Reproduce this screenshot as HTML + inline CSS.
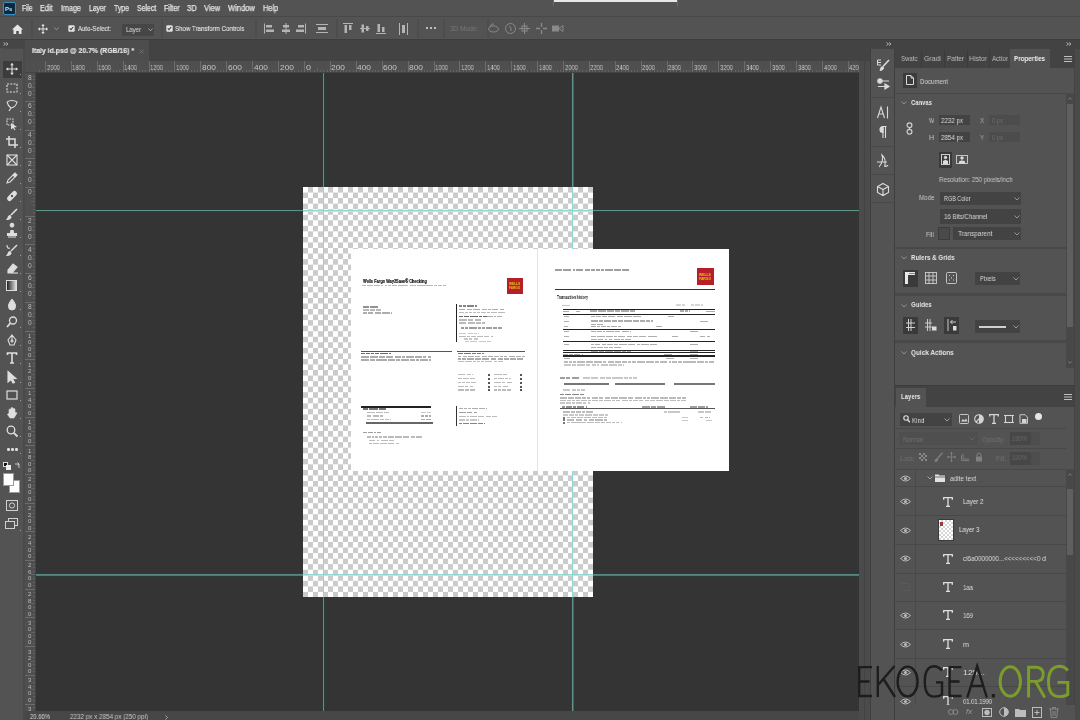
<!DOCTYPE html><html><head><meta charset="utf-8"><style>
*{box-sizing:border-box;margin:0;padding:0}
html,body{width:1080px;height:720px;overflow:hidden;background:#535353;font-family:"Liberation Sans",sans-serif;color:#d6d6d6;-webkit-font-smoothing:antialiased}
div,span,svg{position:absolute}
.t{white-space:nowrap;line-height:1;will-change:transform}
svg{overflow:visible}
</style></head><body>
<div style="left:0px;top:0px;width:1080px;height:17px;background:#535353;"></div>
<div style="left:0px;top:16px;width:1080px;height:1px;background:#484848;"></div>
<div style="left:3px;top:2px;width:13px;height:13px;background:#0a2a40;border:1px solid #3a8fc0;border-radius:2px"></div>
<span class="t" style="left:5px;top:5.5px;font-size:6px;color:#c8e4ff;font-weight:bold">Ps</span>
<span class="t" style="left:22.3px;top:4px;font-size:8.4px;color:#e4e4e4;-webkit-text-stroke:0.25px #e4e4e4;transform:scaleX(0.7905);transform-origin:0 0">File</span>
<span class="t" style="left:40.3px;top:4px;font-size:8.4px;color:#e4e4e4;-webkit-text-stroke:0.25px #e4e4e4;transform:scaleX(0.8774);transform-origin:0 0">Edit</span>
<span class="t" style="left:61px;top:4px;font-size:8.4px;color:#e4e4e4;-webkit-text-stroke:0.25px #e4e4e4;transform:scaleX(0.8567);transform-origin:0 0">Image</span>
<span class="t" style="left:89px;top:4px;font-size:8.4px;color:#e4e4e4;-webkit-text-stroke:0.25px #e4e4e4;transform:scaleX(0.8090);transform-origin:0 0">Layer</span>
<span class="t" style="left:114.2px;top:4px;font-size:8.4px;color:#e4e4e4;-webkit-text-stroke:0.25px #e4e4e4;transform:scaleX(0.8237);transform-origin:0 0">Type</span>
<span class="t" style="left:137.1px;top:4px;font-size:8.4px;color:#e4e4e4;-webkit-text-stroke:0.25px #e4e4e4;transform:scaleX(0.8224);transform-origin:0 0">Select</span>
<span class="t" style="left:163.8px;top:4px;font-size:8.4px;color:#e4e4e4;-webkit-text-stroke:0.25px #e4e4e4;transform:scaleX(0.8464);transform-origin:0 0">Filter</span>
<span class="t" style="left:187.3px;top:4px;font-size:8.4px;color:#e4e4e4;-webkit-text-stroke:0.25px #e4e4e4;transform:scaleX(0.9033);transform-origin:0 0">3D</span>
<span class="t" style="left:204.4px;top:4px;font-size:8.4px;color:#e4e4e4;-webkit-text-stroke:0.25px #e4e4e4;transform:scaleX(0.8972);transform-origin:0 0">View</span>
<span class="t" style="left:228px;top:4px;font-size:8.4px;color:#e4e4e4;-webkit-text-stroke:0.25px #e4e4e4;transform:scaleX(0.9004);transform-origin:0 0">Window</span>
<span class="t" style="left:262.8px;top:4px;font-size:8.4px;color:#e4e4e4;-webkit-text-stroke:0.25px #e4e4e4;transform:scaleX(0.8798);transform-origin:0 0">Help</span>
<div style="left:554px;top:0px;width:123px;height:2px;background:#e8e8e8;"></div>
<div style="left:553px;top:0px;width:1px;height:6px;background:#6a6a6a;"></div>
<div style="left:677px;top:0px;width:1px;height:6px;background:#6a6a6a;"></div>
<div style="left:0px;top:17px;width:1080px;height:23px;background:#535353;"></div>
<div style="left:0px;top:39px;width:1080px;height:1px;background:#3e3e3e;"></div>
<svg style="left:12px;top:24px" width="11" height="10" viewBox="0 0 11 10" fill="#e6e6e6" stroke="#e6e6e6" stroke-width="0"><path d="M5.5 0.5 L11 5.5 L9.5 5.5 L9.5 10 L6.8 10 L6.8 7 L4.2 7 L4.2 10 L1.5 10 L1.5 5.5 L0 5.5 Z"/></svg>
<div style="left:31px;top:19px;width:1.5px;height:19px;background:#4d4d4d;"></div>
<div style="left:161px;top:19px;width:1.5px;height:19px;background:#4d4d4d;"></div>
<div style="left:255px;top:19px;width:1.5px;height:19px;background:#4d4d4d;"></div>
<div style="left:336px;top:19px;width:1.5px;height:19px;background:#4d4d4d;"></div>
<div style="left:417px;top:19px;width:1.5px;height:19px;background:#4d4d4d;"></div>
<div style="left:443px;top:19px;width:1.5px;height:19px;background:#4d4d4d;"></div>
<div style="left:487px;top:19px;width:1.5px;height:19px;background:#4d4d4d;"></div>
<svg style="left:38px;top:24px" width="10" height="10" viewBox="0 0 10 10" fill="none" stroke="#e0e0e0" stroke-width="1"><path d="M5 0.5V9.5M0.5 5H9.5"/><path d="M5 0 L3.3 2 H6.7Z M5 10 L3.3 8 H6.7Z M0 5 L2 3.3 V6.7Z M10 5 L8 3.3 V6.7Z" fill="#e0e0e0" stroke="none"/></svg>
<svg style="left:54px;top:27px" width="5" height="4" viewBox="0 0 5 4" fill="none" stroke="#9a9a9a" stroke-width="0.9"><path d="M0.5 0.5 L2.5 2.8 L4.5 0.5"/></svg>
<svg style="left:68px;top:25px" width="7" height="7" viewBox="0 0 7 7" fill="none" stroke="#e2e2e2" stroke-width="1.1"><rect x="0.3" y="0.3" width="6.4" height="6.4" rx="1.2" fill="#e2e2e2" stroke="none"/><path d="M1.8 3.4 L3 4.7 L5.2 2" stroke="#454545"/></svg>
<span class="t" style="left:78.2px;top:24.7px;font-size:8px;color:#dedede;-webkit-text-stroke:0.2px #dedede;transform:scaleX(0.7572);transform-origin:0 0">Auto-Select:</span>
<div style="left:122px;top:23.5px;width:32px;height:12px;background:#464646;border-radius:1px"></div>
<span class="t" style="left:126px;top:25.93px;font-size:7.4px;color:#dedede;;transform:scaleX(0.8103);transform-origin:0 0">Layer</span>
<svg style="left:148px;top:28px" width="5" height="4" viewBox="0 0 5 4" fill="none" stroke="#aaaaaa" stroke-width="0.9"><path d="M0.5 0.5 L2.5 2.8 L4.5 0.5"/></svg>
<svg style="left:166px;top:25px" width="7" height="7" viewBox="0 0 7 7" fill="none" stroke="#e2e2e2" stroke-width="1.1"><rect x="0.3" y="0.3" width="6.4" height="6.4" rx="1.2" fill="#e2e2e2" stroke="none"/><path d="M1.8 3.4 L3 4.7 L5.2 2" stroke="#454545"/></svg>
<span class="t" style="left:175.3px;top:24.7px;font-size:8px;color:#dedede;-webkit-text-stroke:0.2px #dedede;transform:scaleX(0.7689);transform-origin:0 0">Show Transform Controls</span>
<svg style="left:264px;top:23px" width="10" height="11" viewBox="0 0 10 11" fill="none" stroke="#b4b4b4" stroke-width="1"><path d="M0.5 0.5V10.5"/><rect x="2" y="2" width="6" height="2.5" fill="#b4b4b4" stroke="none"/><rect x="2" y="6.5" width="8" height="2.5" fill="#b4b4b4" stroke="none"/></svg>
<svg style="left:281px;top:23px" width="10" height="11" viewBox="0 0 10 11" fill="none" stroke="#b4b4b4" stroke-width="1"><path d="M5 0V11"/><rect x="2" y="2" width="6" height="2.5" fill="#b4b4b4" stroke="none"/><rect x="1" y="6.5" width="8" height="2.5" fill="#b4b4b4" stroke="none"/></svg>
<svg style="left:296px;top:23px" width="10" height="11" viewBox="0 0 10 11" fill="none" stroke="#b4b4b4" stroke-width="1"><path d="M9.5 0.5V10.5"/><rect x="2" y="2" width="6" height="2.5" fill="#b4b4b4" stroke="none"/><rect x="0" y="6.5" width="8" height="2.5" fill="#b4b4b4" stroke="none"/></svg>
<svg style="left:316px;top:24px" width="12" height="9" viewBox="0 0 12 9" fill="none" stroke="#b4b4b4" stroke-width="1"><path d="M0 0.5H12M0 8.5H12"/><rect x="2" y="3" width="8" height="3" fill="#b4b4b4" stroke="none"/></svg>
<svg style="left:343px;top:23px" width="10" height="11" viewBox="0 0 10 11" fill="none" stroke="#b4b4b4" stroke-width="1"><path d="M0 0.5H10"/><rect x="1.5" y="2" width="2.5" height="8" fill="#b4b4b4" stroke="none"/><rect x="6" y="2" width="2.5" height="5" fill="#b4b4b4" stroke="none"/></svg>
<svg style="left:360px;top:23px" width="10" height="11" viewBox="0 0 10 11" fill="none" stroke="#b4b4b4" stroke-width="1"><path d="M0 5.5H10"/><rect x="1.5" y="1.5" width="2.5" height="8" fill="#b4b4b4" stroke="none"/><rect x="6" y="3" width="2.5" height="5" fill="#b4b4b4" stroke="none"/></svg>
<svg style="left:376px;top:23px" width="10" height="11" viewBox="0 0 10 11" fill="none" stroke="#b4b4b4" stroke-width="1"><path d="M0 10.5H10"/><rect x="1.5" y="1" width="2.5" height="8" fill="#b4b4b4" stroke="none"/><rect x="6" y="4" width="2.5" height="5" fill="#b4b4b4" stroke="none"/></svg>
<svg style="left:399px;top:23px" width="9" height="12" viewBox="0 0 9 12" fill="none" stroke="#b4b4b4" stroke-width="1"><path d="M0.5 0V12M8.5 0V12"/><rect x="3" y="2" width="3" height="8" fill="#b4b4b4" stroke="none"/></svg>
<div style="left:426px;top:27px;width:2.4px;height:2.4px;background:#e0e0e0;border-radius:50%"></div>
<div style="left:430px;top:27px;width:2.4px;height:2.4px;background:#e0e0e0;border-radius:50%"></div>
<div style="left:434px;top:27px;width:2.4px;height:2.4px;background:#e0e0e0;border-radius:50%"></div>
<span class="t" style="left:450px;top:24.93px;font-size:7.4px;color:#7a7a7a;;transform:scaleX(0.8727);transform-origin:0 0">3D Mode:</span>
<svg style="left:488px;top:23px" width="11" height="11" viewBox="0 0 11 11" fill="none" stroke="#8a8a8a" stroke-width="1"><ellipse cx="5.5" cy="6" rx="5" ry="3"/><path d="M2 4 Q3 0 6 1"/></svg>
<svg style="left:505px;top:23px" width="11" height="11" viewBox="0 0 11 11" fill="none" stroke="#8a8a8a" stroke-width="1"><circle cx="5.5" cy="5.5" r="5"/><path d="M4 3 Q7 4 6 8"/></svg>
<svg style="left:519px;top:23px" width="11" height="11" viewBox="0 0 11 11" fill="none" stroke="#8a8a8a" stroke-width="1"><path d="M5.5 0V11M0 5.5H11"/><rect x="3" y="3" width="5" height="5"/></svg>
<svg style="left:536px;top:23px" width="11" height="11" viewBox="0 0 11 11" fill="none" stroke="#8a8a8a" stroke-width="1.3"><path d="M5.5 0V4M5.5 7V11M0 5.5H4M7 5.5H11"/></svg>
<svg style="left:552px;top:24px" width="12" height="9" viewBox="0 0 12 9" fill="none" stroke="#8a8a8a" stroke-width="1"><rect x="0" y="1.5" width="7" height="6" fill="#8a8a8a" stroke="none"/><path d="M7 4.5 L11 1.5 V7.5Z"/></svg>
<div style="left:25px;top:40px;width:845px;height:21px;background:#434343;"></div>
<div style="left:25px;top:40px;width:124px;height:21px;background:#4d4d4d;"></div>
<span class="t" style="left:32px;top:47.2px;font-size:8px;color:#e6e6e6;font-weight:bold;-webkit-text-stroke:0.15px #e6e6e6;transform:scaleX(0.8608);transform-origin:0 0">Italy id.psd @ 20.7% (RGB/16) *</span>
<svg style="left:139px;top:48.5px" width="5" height="5" viewBox="0 0 5 5" fill="none" stroke="#727272" stroke-width="0.9"><path d="M0.5 0.5L4.5 4.5M4.5 0.5L0.5 4.5"/></svg>
<div style="left:25px;top:61px;width:834px;height:12px;background:#4f4f4f;"></div>
<div style="left:25px;top:73px;width:11px;height:638px;background:#4f4f4f;"></div>
<div style="left:25px;top:72px;width:834px;height:1px;background:#434343;"></div>
<div style="left:35px;top:73px;width:1px;height:638px;background:#434343;"></div>
<div style="left:36px;top:61px;width:823px;height:11px;overflow:hidden">
<div style="left:-17px;top:0px;width:1px;height:11px;background:#6c6c6c;"></div>
<div style="left:-14px;top:9px;width:1px;height:2px;background:#626262;"></div>
<div style="left:-10px;top:9px;width:1px;height:2px;background:#626262;"></div>
<div style="left:-7px;top:9px;width:1px;height:2px;background:#626262;"></div>
<div style="left:-4px;top:7px;width:1px;height:4px;background:#626262;"></div>
<div style="left:-1px;top:9px;width:1px;height:2px;background:#626262;"></div>
<div style="left:3px;top:9px;width:1px;height:2px;background:#626262;"></div>
<div style="left:6px;top:9px;width:1px;height:2px;background:#626262;"></div>
<span class="t" style="left:-15.399999999999977px;top:3.2px;font-size:8px;color:#c4c4c4;;transform:scaleX(0.7304);transform-origin:0 0">2200</span>
<div style="left:9px;top:0px;width:1px;height:11px;background:#6c6c6c;"></div>
<div style="left:12px;top:9px;width:1px;height:2px;background:#626262;"></div>
<div style="left:15px;top:9px;width:1px;height:2px;background:#626262;"></div>
<div style="left:19px;top:9px;width:1px;height:2px;background:#626262;"></div>
<div style="left:22px;top:7px;width:1px;height:4px;background:#626262;"></div>
<div style="left:25px;top:9px;width:1px;height:2px;background:#626262;"></div>
<div style="left:28px;top:9px;width:1px;height:2px;background:#626262;"></div>
<div style="left:32px;top:9px;width:1px;height:2px;background:#626262;"></div>
<span class="t" style="left:10.5px;top:3.2px;font-size:8px;color:#c4c4c4;;transform:scaleX(0.7304);transform-origin:0 0">2000</span>
<div style="left:35px;top:0px;width:1px;height:11px;background:#6c6c6c;"></div>
<div style="left:38px;top:9px;width:1px;height:2px;background:#626262;"></div>
<div style="left:41px;top:9px;width:1px;height:2px;background:#626262;"></div>
<div style="left:45px;top:9px;width:1px;height:2px;background:#626262;"></div>
<div style="left:48px;top:7px;width:1px;height:4px;background:#626262;"></div>
<div style="left:51px;top:9px;width:1px;height:2px;background:#626262;"></div>
<div style="left:54px;top:9px;width:1px;height:2px;background:#626262;"></div>
<div style="left:58px;top:9px;width:1px;height:2px;background:#626262;"></div>
<span class="t" style="left:36.400000000000006px;top:3.2px;font-size:8px;color:#c4c4c4;;transform:scaleX(0.7304);transform-origin:0 0">1800</span>
<div style="left:61px;top:0px;width:1px;height:11px;background:#6c6c6c;"></div>
<div style="left:64px;top:9px;width:1px;height:2px;background:#626262;"></div>
<div style="left:67px;top:9px;width:1px;height:2px;background:#626262;"></div>
<div style="left:71px;top:9px;width:1px;height:2px;background:#626262;"></div>
<div style="left:74px;top:7px;width:1px;height:4px;background:#626262;"></div>
<div style="left:77px;top:9px;width:1px;height:2px;background:#626262;"></div>
<div style="left:80px;top:9px;width:1px;height:2px;background:#626262;"></div>
<div style="left:83px;top:9px;width:1px;height:2px;background:#626262;"></div>
<span class="t" style="left:62.30000000000001px;top:3.2px;font-size:8px;color:#c4c4c4;;transform:scaleX(0.7304);transform-origin:0 0">1600</span>
<div style="left:87px;top:0px;width:1px;height:11px;background:#6c6c6c;"></div>
<div style="left:90px;top:9px;width:1px;height:2px;background:#626262;"></div>
<div style="left:93px;top:9px;width:1px;height:2px;background:#626262;"></div>
<div style="left:96px;top:9px;width:1px;height:2px;background:#626262;"></div>
<div style="left:100px;top:7px;width:1px;height:4px;background:#626262;"></div>
<div style="left:103px;top:9px;width:1px;height:2px;background:#626262;"></div>
<div style="left:106px;top:9px;width:1px;height:2px;background:#626262;"></div>
<div style="left:109px;top:9px;width:1px;height:2px;background:#626262;"></div>
<span class="t" style="left:88.20000000000002px;top:3.2px;font-size:8px;color:#c4c4c4;;transform:scaleX(0.7304);transform-origin:0 0">1400</span>
<div style="left:113px;top:0px;width:1px;height:11px;background:#6c6c6c;"></div>
<div style="left:116px;top:9px;width:1px;height:2px;background:#626262;"></div>
<div style="left:119px;top:9px;width:1px;height:2px;background:#626262;"></div>
<div style="left:122px;top:9px;width:1px;height:2px;background:#626262;"></div>
<div style="left:126px;top:7px;width:1px;height:4px;background:#626262;"></div>
<div style="left:129px;top:9px;width:1px;height:2px;background:#626262;"></div>
<div style="left:132px;top:9px;width:1px;height:2px;background:#626262;"></div>
<div style="left:135px;top:9px;width:1px;height:2px;background:#626262;"></div>
<span class="t" style="left:114.10000000000002px;top:3.2px;font-size:8px;color:#c4c4c4;;transform:scaleX(0.7304);transform-origin:0 0">1200</span>
<div style="left:138px;top:0px;width:1px;height:11px;background:#6c6c6c;"></div>
<div style="left:142px;top:9px;width:1px;height:2px;background:#626262;"></div>
<div style="left:145px;top:9px;width:1px;height:2px;background:#626262;"></div>
<div style="left:148px;top:9px;width:1px;height:2px;background:#626262;"></div>
<div style="left:151px;top:7px;width:1px;height:4px;background:#626262;"></div>
<div style="left:155px;top:9px;width:1px;height:2px;background:#626262;"></div>
<div style="left:158px;top:9px;width:1px;height:2px;background:#626262;"></div>
<div style="left:161px;top:9px;width:1px;height:2px;background:#626262;"></div>
<span class="t" style="left:140.0px;top:3.2px;font-size:8px;color:#c4c4c4;;transform:scaleX(0.7304);transform-origin:0 0">1000</span>
<div style="left:164px;top:0px;width:1px;height:11px;background:#6c6c6c;"></div>
<div style="left:168px;top:9px;width:1px;height:2px;background:#626262;"></div>
<div style="left:171px;top:9px;width:1px;height:2px;background:#626262;"></div>
<div style="left:174px;top:9px;width:1px;height:2px;background:#626262;"></div>
<div style="left:177px;top:7px;width:1px;height:4px;background:#626262;"></div>
<div style="left:181px;top:9px;width:1px;height:2px;background:#626262;"></div>
<div style="left:184px;top:9px;width:1px;height:2px;background:#626262;"></div>
<div style="left:187px;top:9px;width:1px;height:2px;background:#626262;"></div>
<span class="t" style="left:165.9px;top:3.2px;font-size:8px;color:#c4c4c4;;transform:scaleX(1.0488);transform-origin:0 0">800</span>
<div style="left:190px;top:0px;width:1px;height:11px;background:#6c6c6c;"></div>
<div style="left:194px;top:9px;width:1px;height:2px;background:#626262;"></div>
<div style="left:197px;top:9px;width:1px;height:2px;background:#626262;"></div>
<div style="left:200px;top:9px;width:1px;height:2px;background:#626262;"></div>
<div style="left:203px;top:7px;width:1px;height:4px;background:#626262;"></div>
<div style="left:206px;top:9px;width:1px;height:2px;background:#626262;"></div>
<div style="left:210px;top:9px;width:1px;height:2px;background:#626262;"></div>
<div style="left:213px;top:9px;width:1px;height:2px;background:#626262;"></div>
<span class="t" style="left:191.8px;top:3.2px;font-size:8px;color:#c4c4c4;;transform:scaleX(1.0488);transform-origin:0 0">600</span>
<div style="left:216px;top:0px;width:1px;height:11px;background:#6c6c6c;"></div>
<div style="left:219px;top:9px;width:1px;height:2px;background:#626262;"></div>
<div style="left:223px;top:9px;width:1px;height:2px;background:#626262;"></div>
<div style="left:226px;top:9px;width:1px;height:2px;background:#626262;"></div>
<div style="left:229px;top:7px;width:1px;height:4px;background:#626262;"></div>
<div style="left:232px;top:9px;width:1px;height:2px;background:#626262;"></div>
<div style="left:236px;top:9px;width:1px;height:2px;background:#626262;"></div>
<div style="left:239px;top:9px;width:1px;height:2px;background:#626262;"></div>
<span class="t" style="left:217.7px;top:3.2px;font-size:8px;color:#c4c4c4;;transform:scaleX(1.0488);transform-origin:0 0">400</span>
<div style="left:242px;top:0px;width:1px;height:11px;background:#6c6c6c;"></div>
<div style="left:245px;top:9px;width:1px;height:2px;background:#626262;"></div>
<div style="left:249px;top:9px;width:1px;height:2px;background:#626262;"></div>
<div style="left:252px;top:9px;width:1px;height:2px;background:#626262;"></div>
<div style="left:255px;top:7px;width:1px;height:4px;background:#626262;"></div>
<div style="left:258px;top:9px;width:1px;height:2px;background:#626262;"></div>
<div style="left:262px;top:9px;width:1px;height:2px;background:#626262;"></div>
<div style="left:265px;top:9px;width:1px;height:2px;background:#626262;"></div>
<span class="t" style="left:243.60000000000002px;top:3.2px;font-size:8px;color:#c4c4c4;;transform:scaleX(1.0488);transform-origin:0 0">200</span>
<div style="left:268px;top:0px;width:1px;height:11px;background:#6c6c6c;"></div>
<div style="left:271px;top:9px;width:1px;height:2px;background:#626262;"></div>
<div style="left:274px;top:9px;width:1px;height:2px;background:#626262;"></div>
<div style="left:278px;top:9px;width:1px;height:2px;background:#626262;"></div>
<div style="left:281px;top:7px;width:1px;height:4px;background:#626262;"></div>
<div style="left:284px;top:9px;width:1px;height:2px;background:#626262;"></div>
<div style="left:287px;top:9px;width:1px;height:2px;background:#626262;"></div>
<div style="left:291px;top:9px;width:1px;height:2px;background:#626262;"></div>
<span class="t" style="left:269.5px;top:3.2px;font-size:8px;color:#c4c4c4;;transform:scaleX(1.1238);transform-origin:0 0">0</span>
<div style="left:294px;top:0px;width:1px;height:11px;background:#6c6c6c;"></div>
<div style="left:297px;top:9px;width:1px;height:2px;background:#626262;"></div>
<div style="left:300px;top:9px;width:1px;height:2px;background:#626262;"></div>
<div style="left:304px;top:9px;width:1px;height:2px;background:#626262;"></div>
<div style="left:307px;top:7px;width:1px;height:4px;background:#626262;"></div>
<div style="left:310px;top:9px;width:1px;height:2px;background:#626262;"></div>
<div style="left:313px;top:9px;width:1px;height:2px;background:#626262;"></div>
<div style="left:317px;top:9px;width:1px;height:2px;background:#626262;"></div>
<span class="t" style="left:295.4px;top:3.2px;font-size:8px;color:#c4c4c4;;transform:scaleX(1.0488);transform-origin:0 0">200</span>
<div style="left:320px;top:0px;width:1px;height:11px;background:#6c6c6c;"></div>
<div style="left:323px;top:9px;width:1px;height:2px;background:#626262;"></div>
<div style="left:326px;top:9px;width:1px;height:2px;background:#626262;"></div>
<div style="left:330px;top:9px;width:1px;height:2px;background:#626262;"></div>
<div style="left:333px;top:7px;width:1px;height:4px;background:#626262;"></div>
<div style="left:336px;top:9px;width:1px;height:2px;background:#626262;"></div>
<div style="left:339px;top:9px;width:1px;height:2px;background:#626262;"></div>
<div style="left:342px;top:9px;width:1px;height:2px;background:#626262;"></div>
<span class="t" style="left:321.3px;top:3.2px;font-size:8px;color:#c4c4c4;;transform:scaleX(1.0488);transform-origin:0 0">400</span>
<div style="left:346px;top:0px;width:1px;height:11px;background:#6c6c6c;"></div>
<div style="left:349px;top:9px;width:1px;height:2px;background:#626262;"></div>
<div style="left:352px;top:9px;width:1px;height:2px;background:#626262;"></div>
<div style="left:355px;top:9px;width:1px;height:2px;background:#626262;"></div>
<div style="left:359px;top:7px;width:1px;height:4px;background:#626262;"></div>
<div style="left:362px;top:9px;width:1px;height:2px;background:#626262;"></div>
<div style="left:365px;top:9px;width:1px;height:2px;background:#626262;"></div>
<div style="left:368px;top:9px;width:1px;height:2px;background:#626262;"></div>
<span class="t" style="left:347.2px;top:3.2px;font-size:8px;color:#c4c4c4;;transform:scaleX(1.0488);transform-origin:0 0">600</span>
<div style="left:372px;top:0px;width:1px;height:11px;background:#6c6c6c;"></div>
<div style="left:375px;top:9px;width:1px;height:2px;background:#626262;"></div>
<div style="left:378px;top:9px;width:1px;height:2px;background:#626262;"></div>
<div style="left:381px;top:9px;width:1px;height:2px;background:#626262;"></div>
<div style="left:385px;top:7px;width:1px;height:4px;background:#626262;"></div>
<div style="left:388px;top:9px;width:1px;height:2px;background:#626262;"></div>
<div style="left:391px;top:9px;width:1px;height:2px;background:#626262;"></div>
<div style="left:394px;top:9px;width:1px;height:2px;background:#626262;"></div>
<span class="t" style="left:373.1px;top:3.2px;font-size:8px;color:#c4c4c4;;transform:scaleX(1.0488);transform-origin:0 0">800</span>
<div style="left:398px;top:0px;width:1px;height:11px;background:#6c6c6c;"></div>
<div style="left:401px;top:9px;width:1px;height:2px;background:#626262;"></div>
<div style="left:404px;top:9px;width:1px;height:2px;background:#626262;"></div>
<div style="left:407px;top:9px;width:1px;height:2px;background:#626262;"></div>
<div style="left:410px;top:7px;width:1px;height:4px;background:#626262;"></div>
<div style="left:414px;top:9px;width:1px;height:2px;background:#626262;"></div>
<div style="left:417px;top:9px;width:1px;height:2px;background:#626262;"></div>
<div style="left:420px;top:9px;width:1px;height:2px;background:#626262;"></div>
<span class="t" style="left:399.0px;top:3.2px;font-size:8px;color:#c4c4c4;;transform:scaleX(0.7304);transform-origin:0 0">1000</span>
<div style="left:423px;top:0px;width:1px;height:11px;background:#6c6c6c;"></div>
<div style="left:427px;top:9px;width:1px;height:2px;background:#626262;"></div>
<div style="left:430px;top:9px;width:1px;height:2px;background:#626262;"></div>
<div style="left:433px;top:9px;width:1px;height:2px;background:#626262;"></div>
<div style="left:436px;top:7px;width:1px;height:4px;background:#626262;"></div>
<div style="left:440px;top:9px;width:1px;height:2px;background:#626262;"></div>
<div style="left:443px;top:9px;width:1px;height:2px;background:#626262;"></div>
<div style="left:446px;top:9px;width:1px;height:2px;background:#626262;"></div>
<span class="t" style="left:424.9px;top:3.2px;font-size:8px;color:#c4c4c4;;transform:scaleX(0.7304);transform-origin:0 0">1200</span>
<div style="left:449px;top:0px;width:1px;height:11px;background:#6c6c6c;"></div>
<div style="left:453px;top:9px;width:1px;height:2px;background:#626262;"></div>
<div style="left:456px;top:9px;width:1px;height:2px;background:#626262;"></div>
<div style="left:459px;top:9px;width:1px;height:2px;background:#626262;"></div>
<div style="left:462px;top:7px;width:1px;height:4px;background:#626262;"></div>
<div style="left:465px;top:9px;width:1px;height:2px;background:#626262;"></div>
<div style="left:469px;top:9px;width:1px;height:2px;background:#626262;"></div>
<div style="left:472px;top:9px;width:1px;height:2px;background:#626262;"></div>
<span class="t" style="left:450.79999999999995px;top:3.2px;font-size:8px;color:#c4c4c4;;transform:scaleX(0.7304);transform-origin:0 0">1400</span>
<div style="left:475px;top:0px;width:1px;height:11px;background:#6c6c6c;"></div>
<div style="left:478px;top:9px;width:1px;height:2px;background:#626262;"></div>
<div style="left:482px;top:9px;width:1px;height:2px;background:#626262;"></div>
<div style="left:485px;top:9px;width:1px;height:2px;background:#626262;"></div>
<div style="left:488px;top:7px;width:1px;height:4px;background:#626262;"></div>
<div style="left:491px;top:9px;width:1px;height:2px;background:#626262;"></div>
<div style="left:495px;top:9px;width:1px;height:2px;background:#626262;"></div>
<div style="left:498px;top:9px;width:1px;height:2px;background:#626262;"></div>
<span class="t" style="left:476.7px;top:3.2px;font-size:8px;color:#c4c4c4;;transform:scaleX(0.7304);transform-origin:0 0">1600</span>
<div style="left:501px;top:0px;width:1px;height:11px;background:#6c6c6c;"></div>
<div style="left:504px;top:9px;width:1px;height:2px;background:#626262;"></div>
<div style="left:508px;top:9px;width:1px;height:2px;background:#626262;"></div>
<div style="left:511px;top:9px;width:1px;height:2px;background:#626262;"></div>
<div style="left:514px;top:7px;width:1px;height:4px;background:#626262;"></div>
<div style="left:517px;top:9px;width:1px;height:2px;background:#626262;"></div>
<div style="left:521px;top:9px;width:1px;height:2px;background:#626262;"></div>
<div style="left:524px;top:9px;width:1px;height:2px;background:#626262;"></div>
<span class="t" style="left:502.6px;top:3.2px;font-size:8px;color:#c4c4c4;;transform:scaleX(0.7304);transform-origin:0 0">1800</span>
<div style="left:527px;top:0px;width:1px;height:11px;background:#6c6c6c;"></div>
<div style="left:530px;top:9px;width:1px;height:2px;background:#626262;"></div>
<div style="left:533px;top:9px;width:1px;height:2px;background:#626262;"></div>
<div style="left:537px;top:9px;width:1px;height:2px;background:#626262;"></div>
<div style="left:540px;top:7px;width:1px;height:4px;background:#626262;"></div>
<div style="left:543px;top:9px;width:1px;height:2px;background:#626262;"></div>
<div style="left:546px;top:9px;width:1px;height:2px;background:#626262;"></div>
<div style="left:550px;top:9px;width:1px;height:2px;background:#626262;"></div>
<span class="t" style="left:528.5px;top:3.2px;font-size:8px;color:#c4c4c4;;transform:scaleX(0.7304);transform-origin:0 0">2000</span>
<div style="left:553px;top:0px;width:1px;height:11px;background:#6c6c6c;"></div>
<div style="left:556px;top:9px;width:1px;height:2px;background:#626262;"></div>
<div style="left:559px;top:9px;width:1px;height:2px;background:#626262;"></div>
<div style="left:563px;top:9px;width:1px;height:2px;background:#626262;"></div>
<div style="left:566px;top:7px;width:1px;height:4px;background:#626262;"></div>
<div style="left:569px;top:9px;width:1px;height:2px;background:#626262;"></div>
<div style="left:572px;top:9px;width:1px;height:2px;background:#626262;"></div>
<div style="left:576px;top:9px;width:1px;height:2px;background:#626262;"></div>
<span class="t" style="left:554.4px;top:3.2px;font-size:8px;color:#c4c4c4;;transform:scaleX(0.7304);transform-origin:0 0">2200</span>
<div style="left:579px;top:0px;width:1px;height:11px;background:#6c6c6c;"></div>
<div style="left:582px;top:9px;width:1px;height:2px;background:#626262;"></div>
<div style="left:585px;top:9px;width:1px;height:2px;background:#626262;"></div>
<div style="left:589px;top:9px;width:1px;height:2px;background:#626262;"></div>
<div style="left:592px;top:7px;width:1px;height:4px;background:#626262;"></div>
<div style="left:595px;top:9px;width:1px;height:2px;background:#626262;"></div>
<div style="left:598px;top:9px;width:1px;height:2px;background:#626262;"></div>
<div style="left:601px;top:9px;width:1px;height:2px;background:#626262;"></div>
<span class="t" style="left:580.3px;top:3.2px;font-size:8px;color:#c4c4c4;;transform:scaleX(0.7304);transform-origin:0 0">2400</span>
<div style="left:605px;top:0px;width:1px;height:11px;background:#6c6c6c;"></div>
<div style="left:608px;top:9px;width:1px;height:2px;background:#626262;"></div>
<div style="left:611px;top:9px;width:1px;height:2px;background:#626262;"></div>
<div style="left:614px;top:9px;width:1px;height:2px;background:#626262;"></div>
<div style="left:618px;top:7px;width:1px;height:4px;background:#626262;"></div>
<div style="left:621px;top:9px;width:1px;height:2px;background:#626262;"></div>
<div style="left:624px;top:9px;width:1px;height:2px;background:#626262;"></div>
<div style="left:627px;top:9px;width:1px;height:2px;background:#626262;"></div>
<span class="t" style="left:606.2px;top:3.2px;font-size:8px;color:#c4c4c4;;transform:scaleX(0.7304);transform-origin:0 0">2600</span>
<div style="left:631px;top:0px;width:1px;height:11px;background:#6c6c6c;"></div>
<div style="left:634px;top:9px;width:1px;height:2px;background:#626262;"></div>
<div style="left:637px;top:9px;width:1px;height:2px;background:#626262;"></div>
<div style="left:640px;top:9px;width:1px;height:2px;background:#626262;"></div>
<div style="left:644px;top:7px;width:1px;height:4px;background:#626262;"></div>
<div style="left:647px;top:9px;width:1px;height:2px;background:#626262;"></div>
<div style="left:650px;top:9px;width:1px;height:2px;background:#626262;"></div>
<div style="left:653px;top:9px;width:1px;height:2px;background:#626262;"></div>
<span class="t" style="left:632.0999999999999px;top:3.2px;font-size:8px;color:#c4c4c4;;transform:scaleX(0.7304);transform-origin:0 0">2800</span>
<div style="left:656px;top:0px;width:1px;height:11px;background:#6c6c6c;"></div>
<div style="left:660px;top:9px;width:1px;height:2px;background:#626262;"></div>
<div style="left:663px;top:9px;width:1px;height:2px;background:#626262;"></div>
<div style="left:666px;top:9px;width:1px;height:2px;background:#626262;"></div>
<div style="left:669px;top:7px;width:1px;height:4px;background:#626262;"></div>
<div style="left:673px;top:9px;width:1px;height:2px;background:#626262;"></div>
<div style="left:676px;top:9px;width:1px;height:2px;background:#626262;"></div>
<div style="left:679px;top:9px;width:1px;height:2px;background:#626262;"></div>
<span class="t" style="left:658.0px;top:3.2px;font-size:8px;color:#c4c4c4;;transform:scaleX(0.7304);transform-origin:0 0">3000</span>
<div style="left:682px;top:0px;width:1px;height:11px;background:#6c6c6c;"></div>
<div style="left:686px;top:9px;width:1px;height:2px;background:#626262;"></div>
<div style="left:689px;top:9px;width:1px;height:2px;background:#626262;"></div>
<div style="left:692px;top:9px;width:1px;height:2px;background:#626262;"></div>
<div style="left:695px;top:7px;width:1px;height:4px;background:#626262;"></div>
<div style="left:699px;top:9px;width:1px;height:2px;background:#626262;"></div>
<div style="left:702px;top:9px;width:1px;height:2px;background:#626262;"></div>
<div style="left:705px;top:9px;width:1px;height:2px;background:#626262;"></div>
<span class="t" style="left:683.9px;top:3.2px;font-size:8px;color:#c4c4c4;;transform:scaleX(0.7304);transform-origin:0 0">3200</span>
<div style="left:708px;top:0px;width:1px;height:11px;background:#6c6c6c;"></div>
<div style="left:712px;top:9px;width:1px;height:2px;background:#626262;"></div>
<div style="left:715px;top:9px;width:1px;height:2px;background:#626262;"></div>
<div style="left:718px;top:9px;width:1px;height:2px;background:#626262;"></div>
<div style="left:721px;top:7px;width:1px;height:4px;background:#626262;"></div>
<div style="left:724px;top:9px;width:1px;height:2px;background:#626262;"></div>
<div style="left:728px;top:9px;width:1px;height:2px;background:#626262;"></div>
<div style="left:731px;top:9px;width:1px;height:2px;background:#626262;"></div>
<span class="t" style="left:709.8px;top:3.2px;font-size:8px;color:#c4c4c4;;transform:scaleX(0.7304);transform-origin:0 0">3400</span>
<div style="left:734px;top:0px;width:1px;height:11px;background:#6c6c6c;"></div>
<div style="left:737px;top:9px;width:1px;height:2px;background:#626262;"></div>
<div style="left:741px;top:9px;width:1px;height:2px;background:#626262;"></div>
<div style="left:744px;top:9px;width:1px;height:2px;background:#626262;"></div>
<div style="left:747px;top:7px;width:1px;height:4px;background:#626262;"></div>
<div style="left:750px;top:9px;width:1px;height:2px;background:#626262;"></div>
<div style="left:754px;top:9px;width:1px;height:2px;background:#626262;"></div>
<div style="left:757px;top:9px;width:1px;height:2px;background:#626262;"></div>
<span class="t" style="left:735.7px;top:3.2px;font-size:8px;color:#c4c4c4;;transform:scaleX(0.7304);transform-origin:0 0">3600</span>
<div style="left:760px;top:0px;width:1px;height:11px;background:#6c6c6c;"></div>
<div style="left:763px;top:9px;width:1px;height:2px;background:#626262;"></div>
<div style="left:767px;top:9px;width:1px;height:2px;background:#626262;"></div>
<div style="left:770px;top:9px;width:1px;height:2px;background:#626262;"></div>
<div style="left:773px;top:7px;width:1px;height:4px;background:#626262;"></div>
<div style="left:776px;top:9px;width:1px;height:2px;background:#626262;"></div>
<div style="left:780px;top:9px;width:1px;height:2px;background:#626262;"></div>
<div style="left:783px;top:9px;width:1px;height:2px;background:#626262;"></div>
<span class="t" style="left:761.5999999999999px;top:3.2px;font-size:8px;color:#c4c4c4;;transform:scaleX(0.7304);transform-origin:0 0">3800</span>
<div style="left:786px;top:0px;width:1px;height:11px;background:#6c6c6c;"></div>
<div style="left:789px;top:9px;width:1px;height:2px;background:#626262;"></div>
<div style="left:792px;top:9px;width:1px;height:2px;background:#626262;"></div>
<div style="left:796px;top:9px;width:1px;height:2px;background:#626262;"></div>
<div style="left:799px;top:7px;width:1px;height:4px;background:#626262;"></div>
<div style="left:802px;top:9px;width:1px;height:2px;background:#626262;"></div>
<div style="left:805px;top:9px;width:1px;height:2px;background:#626262;"></div>
<div style="left:809px;top:9px;width:1px;height:2px;background:#626262;"></div>
<span class="t" style="left:787.5px;top:3.2px;font-size:8px;color:#c4c4c4;;transform:scaleX(0.7304);transform-origin:0 0">4000</span>
<div style="left:812px;top:0px;width:1px;height:11px;background:#6c6c6c;"></div>
<div style="left:815px;top:9px;width:1px;height:2px;background:#626262;"></div>
<div style="left:818px;top:9px;width:1px;height:2px;background:#626262;"></div>
<div style="left:822px;top:9px;width:1px;height:2px;background:#626262;"></div>
<div style="left:825px;top:7px;width:1px;height:4px;background:#626262;"></div>
<div style="left:828px;top:9px;width:1px;height:2px;background:#626262;"></div>
<div style="left:831px;top:9px;width:1px;height:2px;background:#626262;"></div>
<div style="left:835px;top:9px;width:1px;height:2px;background:#626262;"></div>
<span class="t" style="left:813.4px;top:3.2px;font-size:8px;color:#c4c4c4;;transform:scaleX(0.7304);transform-origin:0 0">4200</span>
</div>
<div style="left:25px;top:73px;width:10px;height:638px;overflow:hidden">
<div style="left:0px;top:-30px;width:10px;height:1px;background:#6c6c6c;"></div>
<div style="left:8px;top:-26px;width:2px;height:1px;background:#626262;"></div>
<div style="left:8px;top:-22px;width:2px;height:1px;background:#626262;"></div>
<div style="left:8px;top:-19px;width:2px;height:1px;background:#626262;"></div>
<div style="left:6px;top:-15px;width:4px;height:1px;background:#626262;"></div>
<div style="left:8px;top:-12px;width:2px;height:1px;background:#626262;"></div>
<div style="left:8px;top:-8px;width:2px;height:1px;background:#626262;"></div>
<div style="left:8px;top:-4px;width:2px;height:1px;background:#626262;"></div>
<span class="t" style="left:2.5px;top:-27.2px;font-size:6.0px;color:#bcbcbc;">1</span>
<span class="t" style="left:2.5px;top:-20.7px;font-size:6.0px;color:#bcbcbc;">0</span>
<span class="t" style="left:2.5px;top:-14.2px;font-size:6.0px;color:#bcbcbc;">0</span>
<span class="t" style="left:2.5px;top:-7.699999999999999px;font-size:6.0px;color:#bcbcbc;">0</span>
<div style="left:0px;top:-1px;width:10px;height:1px;background:#6c6c6c;"></div>
<div style="left:8px;top:3px;width:2px;height:1px;background:#626262;"></div>
<div style="left:8px;top:6px;width:2px;height:1px;background:#626262;"></div>
<div style="left:8px;top:10px;width:2px;height:1px;background:#626262;"></div>
<div style="left:6px;top:14px;width:4px;height:1px;background:#626262;"></div>
<div style="left:8px;top:17px;width:2px;height:1px;background:#626262;"></div>
<div style="left:8px;top:21px;width:2px;height:1px;background:#626262;"></div>
<div style="left:8px;top:24px;width:2px;height:1px;background:#626262;"></div>
<span class="t" style="left:2.5px;top:1.5000000000000027px;font-size:6.6px;color:#bcbcbc;">8</span>
<span class="t" style="left:2.5px;top:9.500000000000004px;font-size:6.6px;color:#bcbcbc;">0</span>
<span class="t" style="left:2.5px;top:17.500000000000004px;font-size:6.6px;color:#bcbcbc;">0</span>
<div style="left:0px;top:28px;width:10px;height:1px;background:#6c6c6c;"></div>
<div style="left:8px;top:31px;width:2px;height:1px;background:#626262;"></div>
<div style="left:8px;top:35px;width:2px;height:1px;background:#626262;"></div>
<div style="left:8px;top:39px;width:2px;height:1px;background:#626262;"></div>
<div style="left:6px;top:42px;width:4px;height:1px;background:#626262;"></div>
<div style="left:8px;top:46px;width:2px;height:1px;background:#626262;"></div>
<div style="left:8px;top:49px;width:2px;height:1px;background:#626262;"></div>
<div style="left:8px;top:53px;width:2px;height:1px;background:#626262;"></div>
<span class="t" style="left:2.5px;top:30.200000000000006px;font-size:6.6px;color:#bcbcbc;">6</span>
<span class="t" style="left:2.5px;top:38.2px;font-size:6.6px;color:#bcbcbc;">0</span>
<span class="t" style="left:2.5px;top:46.2px;font-size:6.6px;color:#bcbcbc;">0</span>
<div style="left:0px;top:57px;width:10px;height:1px;background:#6c6c6c;"></div>
<div style="left:8px;top:60px;width:2px;height:1px;background:#626262;"></div>
<div style="left:8px;top:64px;width:2px;height:1px;background:#626262;"></div>
<div style="left:8px;top:67px;width:2px;height:1px;background:#626262;"></div>
<div style="left:6px;top:71px;width:4px;height:1px;background:#626262;"></div>
<div style="left:8px;top:75px;width:2px;height:1px;background:#626262;"></div>
<div style="left:8px;top:78px;width:2px;height:1px;background:#626262;"></div>
<div style="left:8px;top:82px;width:2px;height:1px;background:#626262;"></div>
<span class="t" style="left:2.5px;top:58.89999999999999px;font-size:6.6px;color:#bcbcbc;">4</span>
<span class="t" style="left:2.5px;top:66.89999999999999px;font-size:6.6px;color:#bcbcbc;">0</span>
<span class="t" style="left:2.5px;top:74.89999999999999px;font-size:6.6px;color:#bcbcbc;">0</span>
<div style="left:0px;top:85px;width:10px;height:1px;background:#6c6c6c;"></div>
<div style="left:8px;top:89px;width:2px;height:1px;background:#626262;"></div>
<div style="left:8px;top:92px;width:2px;height:1px;background:#626262;"></div>
<div style="left:8px;top:96px;width:2px;height:1px;background:#626262;"></div>
<div style="left:6px;top:100px;width:4px;height:1px;background:#626262;"></div>
<div style="left:8px;top:103px;width:2px;height:1px;background:#626262;"></div>
<div style="left:8px;top:107px;width:2px;height:1px;background:#626262;"></div>
<div style="left:8px;top:110px;width:2px;height:1px;background:#626262;"></div>
<span class="t" style="left:2.5px;top:87.60000000000001px;font-size:6.6px;color:#bcbcbc;">2</span>
<span class="t" style="left:2.5px;top:95.60000000000001px;font-size:6.6px;color:#bcbcbc;">0</span>
<span class="t" style="left:2.5px;top:103.60000000000001px;font-size:6.6px;color:#bcbcbc;">0</span>
<div style="left:0px;top:114px;width:10px;height:1px;background:#6c6c6c;"></div>
<div style="left:8px;top:118px;width:2px;height:1px;background:#626262;"></div>
<div style="left:8px;top:121px;width:2px;height:1px;background:#626262;"></div>
<div style="left:8px;top:125px;width:2px;height:1px;background:#626262;"></div>
<div style="left:6px;top:128px;width:4px;height:1px;background:#626262;"></div>
<div style="left:8px;top:132px;width:2px;height:1px;background:#626262;"></div>
<div style="left:8px;top:136px;width:2px;height:1px;background:#626262;"></div>
<div style="left:8px;top:139px;width:2px;height:1px;background:#626262;"></div>
<span class="t" style="left:2.5px;top:116.3px;font-size:6.6px;color:#bcbcbc;">0</span>
<div style="left:0px;top:143px;width:10px;height:1px;background:#6c6c6c;"></div>
<div style="left:8px;top:146px;width:2px;height:1px;background:#626262;"></div>
<div style="left:8px;top:150px;width:2px;height:1px;background:#626262;"></div>
<div style="left:8px;top:153px;width:2px;height:1px;background:#626262;"></div>
<div style="left:6px;top:157px;width:4px;height:1px;background:#626262;"></div>
<div style="left:8px;top:161px;width:2px;height:1px;background:#626262;"></div>
<div style="left:8px;top:164px;width:2px;height:1px;background:#626262;"></div>
<div style="left:8px;top:168px;width:2px;height:1px;background:#626262;"></div>
<span class="t" style="left:2.5px;top:145.0px;font-size:6.6px;color:#bcbcbc;">2</span>
<span class="t" style="left:2.5px;top:153.0px;font-size:6.6px;color:#bcbcbc;">0</span>
<span class="t" style="left:2.5px;top:161.0px;font-size:6.6px;color:#bcbcbc;">0</span>
<div style="left:0px;top:171px;width:10px;height:1px;background:#6c6c6c;"></div>
<div style="left:8px;top:175px;width:2px;height:1px;background:#626262;"></div>
<div style="left:8px;top:179px;width:2px;height:1px;background:#626262;"></div>
<div style="left:8px;top:182px;width:2px;height:1px;background:#626262;"></div>
<div style="left:6px;top:186px;width:4px;height:1px;background:#626262;"></div>
<div style="left:8px;top:189px;width:2px;height:1px;background:#626262;"></div>
<div style="left:8px;top:193px;width:2px;height:1px;background:#626262;"></div>
<div style="left:8px;top:197px;width:2px;height:1px;background:#626262;"></div>
<span class="t" style="left:2.5px;top:173.70000000000002px;font-size:6.6px;color:#bcbcbc;">4</span>
<span class="t" style="left:2.5px;top:181.70000000000002px;font-size:6.6px;color:#bcbcbc;">0</span>
<span class="t" style="left:2.5px;top:189.70000000000002px;font-size:6.6px;color:#bcbcbc;">0</span>
<div style="left:0px;top:200px;width:10px;height:1px;background:#6c6c6c;"></div>
<div style="left:8px;top:204px;width:2px;height:1px;background:#626262;"></div>
<div style="left:8px;top:207px;width:2px;height:1px;background:#626262;"></div>
<div style="left:8px;top:211px;width:2px;height:1px;background:#626262;"></div>
<div style="left:6px;top:214px;width:4px;height:1px;background:#626262;"></div>
<div style="left:8px;top:218px;width:2px;height:1px;background:#626262;"></div>
<div style="left:8px;top:222px;width:2px;height:1px;background:#626262;"></div>
<div style="left:8px;top:225px;width:2px;height:1px;background:#626262;"></div>
<span class="t" style="left:2.5px;top:202.40000000000003px;font-size:6.6px;color:#bcbcbc;">6</span>
<span class="t" style="left:2.5px;top:210.40000000000003px;font-size:6.6px;color:#bcbcbc;">0</span>
<span class="t" style="left:2.5px;top:218.40000000000003px;font-size:6.6px;color:#bcbcbc;">0</span>
<div style="left:0px;top:229px;width:10px;height:1px;background:#6c6c6c;"></div>
<div style="left:8px;top:232px;width:2px;height:1px;background:#626262;"></div>
<div style="left:8px;top:236px;width:2px;height:1px;background:#626262;"></div>
<div style="left:8px;top:240px;width:2px;height:1px;background:#626262;"></div>
<div style="left:6px;top:243px;width:4px;height:1px;background:#626262;"></div>
<div style="left:8px;top:247px;width:2px;height:1px;background:#626262;"></div>
<div style="left:8px;top:250px;width:2px;height:1px;background:#626262;"></div>
<div style="left:8px;top:254px;width:2px;height:1px;background:#626262;"></div>
<span class="t" style="left:2.5px;top:231.10000000000002px;font-size:6.6px;color:#bcbcbc;">8</span>
<span class="t" style="left:2.5px;top:239.10000000000002px;font-size:6.6px;color:#bcbcbc;">0</span>
<span class="t" style="left:2.5px;top:247.10000000000002px;font-size:6.6px;color:#bcbcbc;">0</span>
<div style="left:0px;top:258px;width:10px;height:1px;background:#6c6c6c;"></div>
<div style="left:8px;top:261px;width:2px;height:1px;background:#626262;"></div>
<div style="left:8px;top:265px;width:2px;height:1px;background:#626262;"></div>
<div style="left:8px;top:268px;width:2px;height:1px;background:#626262;"></div>
<div style="left:6px;top:272px;width:4px;height:1px;background:#626262;"></div>
<div style="left:8px;top:275px;width:2px;height:1px;background:#626262;"></div>
<div style="left:8px;top:279px;width:2px;height:1px;background:#626262;"></div>
<div style="left:8px;top:283px;width:2px;height:1px;background:#626262;"></div>
<span class="t" style="left:2.5px;top:259.8px;font-size:6.0px;color:#bcbcbc;">1</span>
<span class="t" style="left:2.5px;top:266.3px;font-size:6.0px;color:#bcbcbc;">0</span>
<span class="t" style="left:2.5px;top:272.8px;font-size:6.0px;color:#bcbcbc;">0</span>
<span class="t" style="left:2.5px;top:279.3px;font-size:6.0px;color:#bcbcbc;">0</span>
<div style="left:0px;top:286px;width:10px;height:1px;background:#6c6c6c;"></div>
<div style="left:8px;top:290px;width:2px;height:1px;background:#626262;"></div>
<div style="left:8px;top:293px;width:2px;height:1px;background:#626262;"></div>
<div style="left:8px;top:297px;width:2px;height:1px;background:#626262;"></div>
<div style="left:6px;top:301px;width:4px;height:1px;background:#626262;"></div>
<div style="left:8px;top:304px;width:2px;height:1px;background:#626262;"></div>
<div style="left:8px;top:308px;width:2px;height:1px;background:#626262;"></div>
<div style="left:8px;top:311px;width:2px;height:1px;background:#626262;"></div>
<span class="t" style="left:2.5px;top:288.5px;font-size:6.0px;color:#bcbcbc;">1</span>
<span class="t" style="left:2.5px;top:295.0px;font-size:6.0px;color:#bcbcbc;">2</span>
<span class="t" style="left:2.5px;top:301.5px;font-size:6.0px;color:#bcbcbc;">0</span>
<span class="t" style="left:2.5px;top:308.0px;font-size:6.0px;color:#bcbcbc;">0</span>
<div style="left:0px;top:315px;width:10px;height:1px;background:#6c6c6c;"></div>
<div style="left:8px;top:318px;width:2px;height:1px;background:#626262;"></div>
<div style="left:8px;top:322px;width:2px;height:1px;background:#626262;"></div>
<div style="left:8px;top:326px;width:2px;height:1px;background:#626262;"></div>
<div style="left:6px;top:329px;width:4px;height:1px;background:#626262;"></div>
<div style="left:8px;top:333px;width:2px;height:1px;background:#626262;"></div>
<div style="left:8px;top:336px;width:2px;height:1px;background:#626262;"></div>
<div style="left:8px;top:340px;width:2px;height:1px;background:#626262;"></div>
<span class="t" style="left:2.5px;top:317.2px;font-size:6.0px;color:#bcbcbc;">1</span>
<span class="t" style="left:2.5px;top:323.7px;font-size:6.0px;color:#bcbcbc;">4</span>
<span class="t" style="left:2.5px;top:330.2px;font-size:6.0px;color:#bcbcbc;">0</span>
<span class="t" style="left:2.5px;top:336.7px;font-size:6.0px;color:#bcbcbc;">0</span>
<div style="left:0px;top:344px;width:10px;height:1px;background:#6c6c6c;"></div>
<div style="left:8px;top:347px;width:2px;height:1px;background:#626262;"></div>
<div style="left:8px;top:351px;width:2px;height:1px;background:#626262;"></div>
<div style="left:8px;top:354px;width:2px;height:1px;background:#626262;"></div>
<div style="left:6px;top:358px;width:4px;height:1px;background:#626262;"></div>
<div style="left:8px;top:362px;width:2px;height:1px;background:#626262;"></div>
<div style="left:8px;top:365px;width:2px;height:1px;background:#626262;"></div>
<div style="left:8px;top:369px;width:2px;height:1px;background:#626262;"></div>
<span class="t" style="left:2.5px;top:345.90000000000003px;font-size:6.0px;color:#bcbcbc;">1</span>
<span class="t" style="left:2.5px;top:352.40000000000003px;font-size:6.0px;color:#bcbcbc;">6</span>
<span class="t" style="left:2.5px;top:358.90000000000003px;font-size:6.0px;color:#bcbcbc;">0</span>
<span class="t" style="left:2.5px;top:365.40000000000003px;font-size:6.0px;color:#bcbcbc;">0</span>
<div style="left:0px;top:372px;width:10px;height:1px;background:#6c6c6c;"></div>
<div style="left:8px;top:376px;width:2px;height:1px;background:#626262;"></div>
<div style="left:8px;top:379px;width:2px;height:1px;background:#626262;"></div>
<div style="left:8px;top:383px;width:2px;height:1px;background:#626262;"></div>
<div style="left:6px;top:387px;width:4px;height:1px;background:#626262;"></div>
<div style="left:8px;top:390px;width:2px;height:1px;background:#626262;"></div>
<div style="left:8px;top:394px;width:2px;height:1px;background:#626262;"></div>
<div style="left:8px;top:397px;width:2px;height:1px;background:#626262;"></div>
<span class="t" style="left:2.5px;top:374.6px;font-size:6.0px;color:#bcbcbc;">1</span>
<span class="t" style="left:2.5px;top:381.1px;font-size:6.0px;color:#bcbcbc;">8</span>
<span class="t" style="left:2.5px;top:387.6px;font-size:6.0px;color:#bcbcbc;">0</span>
<span class="t" style="left:2.5px;top:394.1px;font-size:6.0px;color:#bcbcbc;">0</span>
<div style="left:0px;top:401px;width:10px;height:1px;background:#6c6c6c;"></div>
<div style="left:8px;top:405px;width:2px;height:1px;background:#626262;"></div>
<div style="left:8px;top:408px;width:2px;height:1px;background:#626262;"></div>
<div style="left:8px;top:412px;width:2px;height:1px;background:#626262;"></div>
<div style="left:6px;top:415px;width:4px;height:1px;background:#626262;"></div>
<div style="left:8px;top:419px;width:2px;height:1px;background:#626262;"></div>
<div style="left:8px;top:423px;width:2px;height:1px;background:#626262;"></div>
<div style="left:8px;top:426px;width:2px;height:1px;background:#626262;"></div>
<span class="t" style="left:2.5px;top:403.3px;font-size:6.0px;color:#bcbcbc;">2</span>
<span class="t" style="left:2.5px;top:409.8px;font-size:6.0px;color:#bcbcbc;">0</span>
<span class="t" style="left:2.5px;top:416.3px;font-size:6.0px;color:#bcbcbc;">0</span>
<span class="t" style="left:2.5px;top:422.8px;font-size:6.0px;color:#bcbcbc;">0</span>
<div style="left:0px;top:430px;width:10px;height:1px;background:#6c6c6c;"></div>
<div style="left:8px;top:433px;width:2px;height:1px;background:#626262;"></div>
<div style="left:8px;top:437px;width:2px;height:1px;background:#626262;"></div>
<div style="left:8px;top:440px;width:2px;height:1px;background:#626262;"></div>
<div style="left:6px;top:444px;width:4px;height:1px;background:#626262;"></div>
<div style="left:8px;top:448px;width:2px;height:1px;background:#626262;"></div>
<div style="left:8px;top:451px;width:2px;height:1px;background:#626262;"></div>
<div style="left:8px;top:455px;width:2px;height:1px;background:#626262;"></div>
<span class="t" style="left:2.5px;top:432.0px;font-size:6.0px;color:#bcbcbc;">2</span>
<span class="t" style="left:2.5px;top:438.5px;font-size:6.0px;color:#bcbcbc;">2</span>
<span class="t" style="left:2.5px;top:445.0px;font-size:6.0px;color:#bcbcbc;">0</span>
<span class="t" style="left:2.5px;top:451.5px;font-size:6.0px;color:#bcbcbc;">0</span>
<div style="left:0px;top:458px;width:10px;height:1px;background:#6c6c6c;"></div>
<div style="left:8px;top:462px;width:2px;height:1px;background:#626262;"></div>
<div style="left:8px;top:466px;width:2px;height:1px;background:#626262;"></div>
<div style="left:8px;top:469px;width:2px;height:1px;background:#626262;"></div>
<div style="left:6px;top:473px;width:4px;height:1px;background:#626262;"></div>
<div style="left:8px;top:476px;width:2px;height:1px;background:#626262;"></div>
<div style="left:8px;top:480px;width:2px;height:1px;background:#626262;"></div>
<div style="left:8px;top:484px;width:2px;height:1px;background:#626262;"></div>
<span class="t" style="left:2.5px;top:460.7px;font-size:6.0px;color:#bcbcbc;">2</span>
<span class="t" style="left:2.5px;top:467.2px;font-size:6.0px;color:#bcbcbc;">4</span>
<span class="t" style="left:2.5px;top:473.7px;font-size:6.0px;color:#bcbcbc;">0</span>
<span class="t" style="left:2.5px;top:480.2px;font-size:6.0px;color:#bcbcbc;">0</span>
<div style="left:0px;top:487px;width:10px;height:1px;background:#6c6c6c;"></div>
<div style="left:8px;top:491px;width:2px;height:1px;background:#626262;"></div>
<div style="left:8px;top:494px;width:2px;height:1px;background:#626262;"></div>
<div style="left:8px;top:498px;width:2px;height:1px;background:#626262;"></div>
<div style="left:6px;top:501px;width:4px;height:1px;background:#626262;"></div>
<div style="left:8px;top:505px;width:2px;height:1px;background:#626262;"></div>
<div style="left:8px;top:509px;width:2px;height:1px;background:#626262;"></div>
<div style="left:8px;top:512px;width:2px;height:1px;background:#626262;"></div>
<span class="t" style="left:2.5px;top:489.3999999999999px;font-size:6.0px;color:#bcbcbc;">2</span>
<span class="t" style="left:2.5px;top:495.8999999999999px;font-size:6.0px;color:#bcbcbc;">6</span>
<span class="t" style="left:2.5px;top:502.3999999999999px;font-size:6.0px;color:#bcbcbc;">0</span>
<span class="t" style="left:2.5px;top:508.8999999999999px;font-size:6.0px;color:#bcbcbc;">0</span>
<div style="left:0px;top:516px;width:10px;height:1px;background:#6c6c6c;"></div>
<div style="left:8px;top:519px;width:2px;height:1px;background:#626262;"></div>
<div style="left:8px;top:523px;width:2px;height:1px;background:#626262;"></div>
<div style="left:8px;top:527px;width:2px;height:1px;background:#626262;"></div>
<div style="left:6px;top:530px;width:4px;height:1px;background:#626262;"></div>
<div style="left:8px;top:534px;width:2px;height:1px;background:#626262;"></div>
<div style="left:8px;top:537px;width:2px;height:1px;background:#626262;"></div>
<div style="left:8px;top:541px;width:2px;height:1px;background:#626262;"></div>
<span class="t" style="left:2.5px;top:518.0999999999999px;font-size:6.0px;color:#bcbcbc;">2</span>
<span class="t" style="left:2.5px;top:524.5999999999999px;font-size:6.0px;color:#bcbcbc;">8</span>
<span class="t" style="left:2.5px;top:531.0999999999999px;font-size:6.0px;color:#bcbcbc;">0</span>
<span class="t" style="left:2.5px;top:537.5999999999999px;font-size:6.0px;color:#bcbcbc;">0</span>
<div style="left:0px;top:544px;width:10px;height:1px;background:#6c6c6c;"></div>
<div style="left:8px;top:548px;width:2px;height:1px;background:#626262;"></div>
<div style="left:8px;top:552px;width:2px;height:1px;background:#626262;"></div>
<div style="left:8px;top:555px;width:2px;height:1px;background:#626262;"></div>
<div style="left:6px;top:559px;width:4px;height:1px;background:#626262;"></div>
<div style="left:8px;top:562px;width:2px;height:1px;background:#626262;"></div>
<div style="left:8px;top:566px;width:2px;height:1px;background:#626262;"></div>
<div style="left:8px;top:570px;width:2px;height:1px;background:#626262;"></div>
<span class="t" style="left:2.5px;top:546.8px;font-size:6.0px;color:#bcbcbc;">3</span>
<span class="t" style="left:2.5px;top:553.3px;font-size:6.0px;color:#bcbcbc;">0</span>
<span class="t" style="left:2.5px;top:559.8px;font-size:6.0px;color:#bcbcbc;">0</span>
<span class="t" style="left:2.5px;top:566.3px;font-size:6.0px;color:#bcbcbc;">0</span>
<div style="left:0px;top:573px;width:10px;height:1px;background:#6c6c6c;"></div>
<div style="left:8px;top:577px;width:2px;height:1px;background:#626262;"></div>
<div style="left:8px;top:580px;width:2px;height:1px;background:#626262;"></div>
<div style="left:8px;top:584px;width:2px;height:1px;background:#626262;"></div>
<div style="left:6px;top:588px;width:4px;height:1px;background:#626262;"></div>
<div style="left:8px;top:591px;width:2px;height:1px;background:#626262;"></div>
<div style="left:8px;top:595px;width:2px;height:1px;background:#626262;"></div>
<div style="left:8px;top:598px;width:2px;height:1px;background:#626262;"></div>
<span class="t" style="left:2.5px;top:575.5px;font-size:6.0px;color:#bcbcbc;">3</span>
<span class="t" style="left:2.5px;top:582.0px;font-size:6.0px;color:#bcbcbc;">2</span>
<span class="t" style="left:2.5px;top:588.5px;font-size:6.0px;color:#bcbcbc;">0</span>
<span class="t" style="left:2.5px;top:595.0px;font-size:6.0px;color:#bcbcbc;">0</span>
<div style="left:0px;top:602px;width:10px;height:1px;background:#6c6c6c;"></div>
<div style="left:8px;top:605px;width:2px;height:1px;background:#626262;"></div>
<div style="left:8px;top:609px;width:2px;height:1px;background:#626262;"></div>
<div style="left:8px;top:613px;width:2px;height:1px;background:#626262;"></div>
<div style="left:6px;top:616px;width:4px;height:1px;background:#626262;"></div>
<div style="left:8px;top:620px;width:2px;height:1px;background:#626262;"></div>
<div style="left:8px;top:623px;width:2px;height:1px;background:#626262;"></div>
<div style="left:8px;top:627px;width:2px;height:1px;background:#626262;"></div>
<span class="t" style="left:2.5px;top:604.1999999999999px;font-size:6.0px;color:#bcbcbc;">3</span>
<span class="t" style="left:2.5px;top:610.6999999999999px;font-size:6.0px;color:#bcbcbc;">4</span>
<span class="t" style="left:2.5px;top:617.1999999999999px;font-size:6.0px;color:#bcbcbc;">0</span>
<span class="t" style="left:2.5px;top:623.6999999999999px;font-size:6.0px;color:#bcbcbc;">0</span>
<div style="left:0px;top:631px;width:10px;height:1px;background:#6c6c6c;"></div>
<div style="left:8px;top:634px;width:2px;height:1px;background:#626262;"></div>
<div style="left:8px;top:638px;width:2px;height:1px;background:#626262;"></div>
<div style="left:8px;top:641px;width:2px;height:1px;background:#626262;"></div>
<div style="left:6px;top:645px;width:4px;height:1px;background:#626262;"></div>
<div style="left:8px;top:649px;width:2px;height:1px;background:#626262;"></div>
<div style="left:8px;top:652px;width:2px;height:1px;background:#626262;"></div>
<div style="left:8px;top:656px;width:2px;height:1px;background:#626262;"></div>
<span class="t" style="left:2.5px;top:632.9px;font-size:6.0px;color:#bcbcbc;">3</span>
<span class="t" style="left:2.5px;top:639.4px;font-size:6.0px;color:#bcbcbc;">6</span>
<span class="t" style="left:2.5px;top:645.9px;font-size:6.0px;color:#bcbcbc;">0</span>
<span class="t" style="left:2.5px;top:652.4px;font-size:6.0px;color:#bcbcbc;">0</span>
</div>
<div style="left:36px;top:73px;width:823px;height:638px;background:#343434;"></div>
<div style="left:303px;top:187px;width:290px;height:410px;background:#ffffff;background-image:conic-gradient(#cbcbcb 25%,#fff 0 50%,#cbcbcb 0 75%,#fff 0);background-size:10px 11.1px;background-position:0 0"></div>
<div style="left:36px;top:210px;width:823px;height:1px;background:#5f938a;"></div>
<div style="left:36px;top:211px;width:267px;height:1px;background:#24433b;"></div>
<div style="left:593px;top:211px;width:266px;height:1px;background:#24433b;"></div>
<div style="left:36px;top:573px;width:267px;height:1px;background:#2c3a39;"></div>
<div style="left:593px;top:573px;width:266px;height:1px;background:#2c3a39;"></div>
<div style="left:36px;top:574px;width:823px;height:1px;background:#578781;"></div>
<div style="left:36px;top:575px;width:267px;height:1px;background:#4f7b75;"></div>
<div style="left:593px;top:575px;width:266px;height:1px;background:#4f7b75;"></div>
<div style="left:36px;top:576px;width:267px;height:1px;background:#293a36;"></div>
<div style="left:593px;top:576px;width:266px;height:1px;background:#293a36;"></div>
<div style="left:323px;top:73px;width:1px;height:638px;background:#5f938a;"></div>
<div style="left:324px;top:73px;width:1px;height:114px;background:#24403a;"></div>
<div style="left:324px;top:597px;width:1px;height:114px;background:#24403a;"></div>
<div style="left:571px;top:73px;width:1px;height:114px;background:#25403a;"></div>
<div style="left:571px;top:597px;width:1px;height:114px;background:#25403a;"></div>
<div style="left:572px;top:73px;width:1px;height:638px;background:#5f938a;"></div>
<div style="left:573px;top:73px;width:1px;height:114px;background:#3e6660;"></div>
<div style="left:573px;top:597px;width:1px;height:114px;background:#3e6660;"></div>
<div style="left:303px;top:210px;width:290px;height:1px;background:#8fd8d2;"></div>
<div style="left:303px;top:211px;width:290px;height:1px;background:#b8e6e0;"></div>
<div style="left:303px;top:574px;width:290px;height:1px;background:#8fd8d2;"></div>
<div style="left:303px;top:575px;width:290px;height:1px;background:#b8e6e0;"></div>
<div style="left:323px;top:187px;width:1px;height:410px;background:#8fd8d2;"></div>
<div style="left:572px;top:187px;width:1px;height:410px;background:#8fd8d2;"></div>
<div style="left:351px;top:249px;width:378px;height:222px;background:#ffffff;"></div>
<div style="left:537px;top:249px;width:1px;height:222px;background:#e4e4e4;"></div>
<span class="t" style="left:362.5px;top:277.51px;font-size:6.2px;color:#111;font-weight:bold;-webkit-text-stroke:0.2px #111;transform:scaleX(0.6302);transform-origin:0 0">Wells Fargo Way2Save® Checking</span>
<div style="left:362px;top:284.85px;width:84px;height:1.3px;background:transparent;background-image:linear-gradient(90deg,transparent 0.00px,#b9b9b9 0.00px,#b9b9b9 4.28px,transparent 4.28px,transparent 5.19px,#b9b9b9 5.19px,#b9b9b9 11.27px,transparent 11.27px,transparent 12.12px,#b9b9b9 12.12px,#b9b9b9 17.56px,transparent 17.56px,transparent 18.62px,#b9b9b9 18.62px,#b9b9b9 21.44px,transparent 21.44px,transparent 22.60px,#b9b9b9 22.60px,#b9b9b9 25.30px,transparent 25.30px,transparent 26.40px,#b9b9b9 26.40px,#b9b9b9 29.29px,transparent 29.29px,transparent 30.15px,#b9b9b9 30.15px,#b9b9b9 34.99px,transparent 34.99px,transparent 36.37px,#b9b9b9 36.37px,#b9b9b9 39.55px,transparent 39.55px,transparent 40.50px,#b9b9b9 40.50px,#b9b9b9 46.45px,transparent 46.45px,transparent 47.92px,#b9b9b9 47.92px,#b9b9b9 53.59px,transparent 53.59px,transparent 54.67px,#b9b9b9 54.67px,#b9b9b9 62.54px,transparent 62.54px,transparent 63.37px,#b9b9b9 63.37px,#b9b9b9 70.59px,transparent 70.59px,transparent 71.60px,#b9b9b9 71.60px,#b9b9b9 74.89px,transparent 74.89px,transparent 75.77px,#b9b9b9 75.77px,#b9b9b9 79.97px,transparent 79.97px,transparent 81.34px,#b9b9b9 81.34px,#b9b9b9 84.00px,transparent 84.00px)"></div>
<div style="left:507px;top:278px;width:16px;height:16px;background:#b3202a;"></div>
<span class="t" style="left:508.5px;top:282.5px;font-size:3.2px;color:#f2c21a;font-weight:bold;line-height:1.2">WELLS<br>FARGO</span>
<div style="left:363px;top:306.35px;width:15px;height:1.3px;background:transparent;background-image:linear-gradient(90deg,transparent 0.00px,#929292 0.00px,#929292 6.01px,transparent 6.01px,transparent 7.07px,#929292 7.07px,#929292 12.59px,transparent 12.59px,transparent 13.43px,#929292 13.43px,#929292 15.00px,transparent 15.00px)"></div>
<div style="left:363px;top:309.35px;width:19px;height:1.3px;background:transparent;background-image:linear-gradient(90deg,transparent 0.00px,#bbbbbb 0.00px,#bbbbbb 6.24px,transparent 6.24px,transparent 7.34px,#bbbbbb 7.34px,#bbbbbb 11.57px,transparent 11.57px,transparent 12.78px,#bbbbbb 12.78px,#bbbbbb 17.77px,transparent 17.77px,transparent 18.78px,#bbbbbb 18.78px,#bbbbbb 19.00px,transparent 19.00px)"></div>
<div style="left:363px;top:312.35px;width:29px;height:1.3px;background:transparent;background-image:linear-gradient(90deg,transparent 0.00px,#adadad 0.00px,#adadad 3.84px,transparent 3.84px,transparent 5.04px,#adadad 5.04px,#adadad 10.43px,transparent 10.43px,transparent 11.85px,#adadad 11.85px,#adadad 18.36px,transparent 18.36px,transparent 19.36px,#adadad 19.36px,#adadad 27.25px,transparent 27.25px,transparent 28.13px,#adadad 28.13px,#adadad 29.00px,transparent 29.00px)"></div>
<div style="left:456px;top:304px;width:1px;height:38px;background:#222;"></div>
<div style="left:459px;top:305.35px;width:18px;height:1.3px;background:transparent;background-image:linear-gradient(90deg,transparent 0.00px,#848484 0.00px,#848484 3.34px,transparent 3.34px,transparent 4.48px,#848484 4.48px,#848484 7.19px,transparent 7.19px,transparent 8.46px,#848484 8.46px,#848484 15.17px,transparent 15.17px,transparent 16.37px,#848484 16.37px,#848484 18.00px,transparent 18.00px)"></div>
<div style="left:459px;top:308.85px;width:45px;height:1.3px;background:transparent;background-image:linear-gradient(90deg,transparent 0.00px,#adadad 0.00px,#adadad 6.32px,transparent 6.32px,transparent 7.54px,#adadad 7.54px,#adadad 13.23px,transparent 13.23px,transparent 14.35px,#adadad 14.35px,#adadad 21.47px,transparent 21.47px,transparent 22.93px,#adadad 22.93px,#adadad 28.04px,transparent 28.04px,transparent 29.30px,#adadad 29.30px,#adadad 32.14px,transparent 32.14px,transparent 33.43px,#adadad 33.43px,#adadad 39.49px,transparent 39.49px,transparent 40.98px,#adadad 40.98px,#adadad 45.00px,transparent 45.00px)"></div>
<div style="left:459px;top:311.85px;width:46px;height:1.3px;background:transparent;background-image:linear-gradient(90deg,transparent 0.00px,#bbbbbb 0.00px,#bbbbbb 4.62px,transparent 4.62px,transparent 5.89px,#bbbbbb 5.89px,#bbbbbb 8.51px,transparent 8.51px,transparent 9.64px,#bbbbbb 9.64px,#bbbbbb 13.06px,transparent 13.06px,transparent 13.94px,#bbbbbb 13.94px,#bbbbbb 16.77px,transparent 16.77px,transparent 18.11px,#bbbbbb 18.11px,#bbbbbb 21.32px,transparent 21.32px,transparent 22.29px,#bbbbbb 22.29px,#bbbbbb 26.94px,transparent 26.94px,transparent 28.35px,#bbbbbb 28.35px,#bbbbbb 31.29px,transparent 31.29px,transparent 32.41px,#bbbbbb 32.41px,#bbbbbb 37.93px,transparent 37.93px,transparent 39.35px,#bbbbbb 39.35px,#bbbbbb 46.00px,transparent 46.00px)"></div>
<div style="left:459px;top:315.85px;width:28px;height:1.6px;background:transparent;background-image:linear-gradient(90deg,transparent 0.00px,#696969 0.00px,#696969 4.03px,transparent 4.03px,transparent 5.12px,#696969 5.12px,#696969 9.60px,transparent 9.60px,transparent 11.01px,#696969 11.01px,#696969 18.78px,transparent 18.78px,transparent 19.69px,#696969 19.69px,#696969 23.16px,transparent 23.16px,transparent 24.12px,#696969 24.12px,#696969 27.90px,transparent 27.90px)"></div>
<div style="left:487px;top:315.85px;width:16px;height:1.3px;background:transparent;background-image:linear-gradient(90deg,transparent 0.00px,#adadad 0.00px,#adadad 5.74px,transparent 5.74px,transparent 6.72px,#adadad 6.72px,#adadad 9.25px,transparent 9.25px,transparent 10.34px,#adadad 10.34px,#adadad 14.87px,transparent 14.87px)"></div>
<div style="left:459px;top:319.35px;width:22px;height:1.3px;background:transparent;background-image:linear-gradient(90deg,transparent 0.00px,#bbbbbb 0.00px,#bbbbbb 7.74px,transparent 7.74px,transparent 9.03px,#bbbbbb 9.03px,#bbbbbb 14.36px,transparent 14.36px,transparent 15.59px,#bbbbbb 15.59px,#bbbbbb 21.81px,transparent 21.81px)"></div>
<div style="left:459px;top:322.35px;width:27px;height:1.3px;background:transparent;background-image:linear-gradient(90deg,transparent 0.00px,#bbbbbb 0.00px,#bbbbbb 7.45px,transparent 7.45px,transparent 8.79px,#bbbbbb 8.79px,#bbbbbb 16.10px,transparent 16.10px,transparent 17.46px,#bbbbbb 17.46px,#bbbbbb 22.12px,transparent 22.12px,transparent 23.20px,#bbbbbb 23.20px,#bbbbbb 26.27px,transparent 26.27px)"></div>
<div style="left:461px;top:327.35px;width:42px;height:1.3px;background:transparent;background-image:linear-gradient(90deg,transparent 0.00px,#9f9f9f 0.00px,#9f9f9f 2.84px,transparent 2.84px,transparent 3.69px,#9f9f9f 3.69px,#9f9f9f 7.34px,transparent 7.34px,transparent 8.25px,#9f9f9f 8.25px,#9f9f9f 12.62px,transparent 12.62px,transparent 13.46px,#9f9f9f 13.46px,#9f9f9f 15.96px,transparent 15.96px,transparent 16.87px,#9f9f9f 16.87px,#9f9f9f 19.92px,transparent 19.92px,transparent 20.98px,#9f9f9f 20.98px,#9f9f9f 23.62px,transparent 23.62px,transparent 25.03px,#9f9f9f 25.03px,#9f9f9f 30.91px,transparent 30.91px,transparent 31.81px,#9f9f9f 31.81px,#9f9f9f 35.70px,transparent 35.70px,transparent 36.74px,#9f9f9f 36.74px,#9f9f9f 41.25px,transparent 41.25px)"></div>
<div style="left:459px;top:332.85px;width:20px;height:1.3px;background:transparent;background-image:linear-gradient(90deg,transparent 0.00px,#c8c8c8 0.00px,#c8c8c8 7.17px,transparent 7.17px,transparent 8.66px,#c8c8c8 8.66px,#c8c8c8 13.73px,transparent 13.73px,transparent 14.87px,#c8c8c8 14.87px,#c8c8c8 17.84px,transparent 17.84px,transparent 18.71px,#c8c8c8 18.71px,#c8c8c8 20.00px,transparent 20.00px)"></div>
<div style="left:459px;top:335.85px;width:34px;height:1.3px;background:transparent;background-image:linear-gradient(90deg,transparent 0.00px,#bbbbbb 0.00px,#bbbbbb 7.06px,transparent 7.06px,transparent 7.97px,#bbbbbb 7.97px,#bbbbbb 10.60px,transparent 10.60px,transparent 12.06px,#bbbbbb 12.06px,#bbbbbb 17.47px,transparent 17.47px,transparent 18.37px,#bbbbbb 18.37px,#bbbbbb 23.86px,transparent 23.86px,transparent 24.68px,#bbbbbb 24.68px,#bbbbbb 30.08px,transparent 30.08px,transparent 31.57px,#bbbbbb 31.57px,#bbbbbb 34.00px,transparent 34.00px)"></div>
<div style="left:464px;top:338.35px;width:14px;height:1.3px;background:transparent;background-image:linear-gradient(90deg,transparent 0.00px,#c8c8c8 0.00px,#c8c8c8 3.94px,transparent 3.94px,transparent 4.99px,#c8c8c8 4.99px,#c8c8c8 8.41px,transparent 8.41px,transparent 9.75px,#c8c8c8 9.75px,#c8c8c8 14.00px,transparent 14.00px)"></div>
<div style="left:465px;top:340.85px;width:26px;height:1.3px;background:transparent;background-image:linear-gradient(90deg,transparent 0.00px,#c8c8c8 0.00px,#c8c8c8 4.31px,transparent 4.31px,transparent 5.27px,#c8c8c8 5.27px,#c8c8c8 12.23px,transparent 12.23px,transparent 13.72px,#c8c8c8 13.72px,#c8c8c8 20.91px,transparent 20.91px,transparent 22.28px,#c8c8c8 22.28px,#c8c8c8 26.00px,transparent 26.00px)"></div>
<div style="left:361px;top:351px;width:91px;height:1px;background:#555;"></div>
<div style="left:457px;top:351px;width:68px;height:1px;background:#555;"></div>
<div style="left:361px;top:352.85px;width:30px;height:1.6px;background:transparent;background-image:linear-gradient(90deg,transparent 0.00px,#696969 0.00px,#696969 3.75px,transparent 3.75px,transparent 4.91px,#696969 4.91px,#696969 9.37px,transparent 9.37px,transparent 10.19px,#696969 10.19px,#696969 12.84px,transparent 12.84px,transparent 13.83px,#696969 13.83px,#696969 17.76px,transparent 17.76px,transparent 19.04px,#696969 19.04px,#696969 26.81px,transparent 26.81px,transparent 27.92px,#696969 27.92px,#696969 30.00px,transparent 30.00px)"></div>
<div style="left:361px;top:356.35px;width:70px;height:1.3px;background:transparent;background-image:linear-gradient(90deg,transparent 0.00px,#adadad 0.00px,#adadad 7.75px,transparent 7.75px,transparent 8.81px,#adadad 8.81px,#adadad 12.52px,transparent 12.52px,transparent 13.48px,#adadad 13.48px,#adadad 17.06px,transparent 17.06px,transparent 18.00px,#adadad 18.00px,#adadad 23.94px,transparent 23.94px,transparent 25.37px,#adadad 25.37px,#adadad 32.49px,transparent 32.49px,transparent 33.62px,#adadad 33.62px,#adadad 39.72px,transparent 39.72px,transparent 41.08px,#adadad 41.08px,#adadad 44.04px,transparent 44.04px,transparent 45.30px,#adadad 45.30px,#adadad 52.81px,transparent 52.81px,transparent 54.16px,#adadad 54.16px,#adadad 60.78px,transparent 60.78px,transparent 61.92px,#adadad 61.92px,#adadad 65.40px,transparent 65.40px,transparent 66.75px,#adadad 66.75px,#adadad 70.00px,transparent 70.00px)"></div>
<div style="left:361px;top:359.35px;width:70px;height:1.3px;background:transparent;background-image:linear-gradient(90deg,transparent 0.00px,#adadad 0.00px,#adadad 7.84px,transparent 7.84px,transparent 8.92px,#adadad 8.92px,#adadad 13.63px,transparent 13.63px,transparent 15.09px,#adadad 15.09px,#adadad 21.58px,transparent 21.58px,transparent 22.50px,#adadad 22.50px,#adadad 25.70px,transparent 25.70px,transparent 26.60px,#adadad 26.60px,#adadad 34.08px,transparent 34.08px,transparent 35.44px,#adadad 35.44px,#adadad 38.75px,transparent 38.75px,transparent 40.13px,#adadad 40.13px,#adadad 48.02px,transparent 48.02px,transparent 49.28px,#adadad 49.28px,#adadad 53.70px,transparent 53.70px,transparent 54.89px,#adadad 54.89px,#adadad 58.11px,transparent 58.11px,transparent 58.92px,#adadad 58.92px,#adadad 66.76px,transparent 66.76px,transparent 68.01px,#adadad 68.01px,#adadad 70.00px,transparent 70.00px)"></div>
<div style="left:458px;top:352.85px;width:26px;height:1.5px;background:transparent;background-image:linear-gradient(90deg,transparent 0.00px,#777777 0.00px,#777777 4.89px,transparent 4.89px,transparent 6.30px,#777777 6.30px,#777777 13.34px,transparent 13.34px,transparent 14.29px,#777777 14.29px,#777777 18.17px,transparent 18.17px,transparent 19.18px,#777777 19.18px,#777777 23.00px,transparent 23.00px,transparent 24.21px,#777777 24.21px,#777777 26.00px,transparent 26.00px)"></div>
<div style="left:458px;top:355.85px;width:67px;height:1.3px;background:transparent;background-image:linear-gradient(90deg,transparent 0.00px,#adadad 0.00px,#adadad 3.22px,transparent 3.22px,transparent 4.66px,#adadad 4.66px,#adadad 9.10px,transparent 9.10px,transparent 10.22px,#adadad 10.22px,#adadad 15.93px,transparent 15.93px,transparent 17.37px,#adadad 17.37px,#adadad 22.18px,transparent 22.18px,transparent 23.62px,#adadad 23.62px,#adadad 28.88px,transparent 28.88px,transparent 30.05px,#adadad 30.05px,#adadad 35.43px,transparent 35.43px,transparent 36.25px,#adadad 36.25px,#adadad 41.17px,transparent 41.17px,transparent 42.09px,#adadad 42.09px,#adadad 44.62px,transparent 44.62px,transparent 45.98px,#adadad 45.98px,#adadad 49.42px,transparent 49.42px,transparent 50.55px,#adadad 50.55px,#adadad 57.04px,transparent 57.04px,transparent 58.23px,#adadad 58.23px,#adadad 62.53px,transparent 62.53px,transparent 63.69px,#adadad 63.69px,#adadad 67.00px,transparent 67.00px)"></div>
<div style="left:458px;top:358.35px;width:67px;height:1.3px;background:transparent;background-image:linear-gradient(90deg,transparent 0.00px,#adadad 0.00px,#adadad 3.08px,transparent 3.08px,transparent 4.28px,#adadad 4.28px,#adadad 8.14px,transparent 8.14px,transparent 9.14px,#adadad 9.14px,#adadad 15.88px,transparent 15.88px,transparent 17.04px,#adadad 17.04px,#adadad 22.63px,transparent 22.63px,transparent 23.96px,#adadad 23.96px,#adadad 31.48px,transparent 31.48px,transparent 32.59px,#adadad 32.59px,#adadad 38.46px,transparent 38.46px,transparent 39.61px,#adadad 39.61px,#adadad 44.93px,transparent 44.93px,transparent 46.21px,#adadad 46.21px,#adadad 51.20px,transparent 51.20px,transparent 52.38px,#adadad 52.38px,#adadad 57.50px,transparent 57.50px,transparent 58.96px,#adadad 58.96px,#adadad 65.31px,transparent 65.31px,transparent 66.72px,#adadad 66.72px,#adadad 67.00px,transparent 67.00px)"></div>
<div style="left:458px;top:360.85px;width:45px;height:1.3px;background:transparent;background-image:linear-gradient(90deg,transparent 0.00px,#bbbbbb 0.00px,#bbbbbb 5.58px,transparent 5.58px,transparent 7.04px,#bbbbbb 7.04px,#bbbbbb 14.16px,transparent 14.16px,transparent 15.05px,#bbbbbb 15.05px,#bbbbbb 18.22px,transparent 18.22px,transparent 19.33px,#bbbbbb 19.33px,#bbbbbb 22.23px,transparent 22.23px,transparent 23.20px,#bbbbbb 23.20px,#bbbbbb 26.10px,transparent 26.10px,transparent 27.37px,#bbbbbb 27.37px,#bbbbbb 34.18px,transparent 34.18px,transparent 35.61px,#bbbbbb 35.61px,#bbbbbb 38.96px,transparent 38.96px,transparent 40.26px,#bbbbbb 40.26px,#bbbbbb 45.00px,transparent 45.00px)"></div>
<div style="left:458px;top:373.85px;width:15px;height:1.3px;background:transparent;background-image:linear-gradient(90deg,transparent 0.00px,#bbbbbb 0.00px,#bbbbbb 7.36px,transparent 7.36px,transparent 8.83px,#bbbbbb 8.83px,#bbbbbb 12.54px,transparent 12.54px,transparent 14.01px,#bbbbbb 14.01px,#bbbbbb 15.00px,transparent 15.00px)"></div>
<div style="left:488px;top:373.5px;width:2px;height:2px;background:#555;"></div>
<div style="left:494px;top:373.85px;width:14px;height:1.3px;background:transparent;background-image:linear-gradient(90deg,transparent 0.00px,#bbbbbb 0.00px,#bbbbbb 7.94px,transparent 7.94px,transparent 9.33px,#bbbbbb 9.33px,#bbbbbb 12.72px,transparent 12.72px,transparent 13.82px,#bbbbbb 13.82px,#bbbbbb 14.00px,transparent 14.00px)"></div>
<div style="left:520px;top:373.5px;width:2px;height:2px;background:#555;"></div>
<div style="left:458px;top:377.85px;width:17px;height:1.3px;background:transparent;background-image:linear-gradient(90deg,transparent 0.00px,#bbbbbb 0.00px,#bbbbbb 3.58px,transparent 3.58px,transparent 4.60px,#bbbbbb 4.60px,#bbbbbb 11.07px,transparent 11.07px,transparent 11.89px,#bbbbbb 11.89px,#bbbbbb 17.00px,transparent 17.00px)"></div>
<div style="left:488px;top:377.5px;width:2px;height:2px;background:#555;"></div>
<div style="left:494px;top:377.85px;width:17px;height:1.3px;background:transparent;background-image:linear-gradient(90deg,transparent 0.00px,#bbbbbb 0.00px,#bbbbbb 2.60px,transparent 2.60px,transparent 3.63px,#bbbbbb 3.63px,#bbbbbb 9.56px,transparent 9.56px,transparent 10.72px,#bbbbbb 10.72px,#bbbbbb 13.58px,transparent 13.58px,transparent 15.06px,#bbbbbb 15.06px,#bbbbbb 17.00px,transparent 17.00px)"></div>
<div style="left:520px;top:377.5px;width:2px;height:2px;background:#555;"></div>
<div style="left:458px;top:381.85px;width:19px;height:1.3px;background:transparent;background-image:linear-gradient(90deg,transparent 0.00px,#bbbbbb 0.00px,#bbbbbb 3.08px,transparent 3.08px,transparent 4.06px,#bbbbbb 4.06px,#bbbbbb 6.78px,transparent 6.78px,transparent 8.13px,#bbbbbb 8.13px,#bbbbbb 12.11px,transparent 12.11px,transparent 13.00px,#bbbbbb 13.00px,#bbbbbb 17.83px,transparent 17.83px)"></div>
<div style="left:488px;top:381.5px;width:2px;height:2px;background:#555;"></div>
<div style="left:494px;top:381.85px;width:20px;height:1.3px;background:transparent;background-image:linear-gradient(90deg,transparent 0.00px,#bbbbbb 0.00px,#bbbbbb 7.00px,transparent 7.00px,transparent 7.99px,#bbbbbb 7.99px,#bbbbbb 11.31px,transparent 11.31px,transparent 12.75px,#bbbbbb 12.75px,#bbbbbb 18.39px,transparent 18.39px,transparent 19.68px,#bbbbbb 19.68px,#bbbbbb 20.00px,transparent 20.00px)"></div>
<div style="left:520px;top:381.5px;width:2px;height:2px;background:#555;"></div>
<div style="left:458px;top:385.85px;width:15px;height:1.3px;background:transparent;background-image:linear-gradient(90deg,transparent 0.00px,#bbbbbb 0.00px,#bbbbbb 6.29px,transparent 6.29px,transparent 7.38px,#bbbbbb 7.38px,#bbbbbb 10.28px,transparent 10.28px,transparent 11.74px,#bbbbbb 11.74px,#bbbbbb 15.00px,transparent 15.00px)"></div>
<div style="left:488px;top:385.5px;width:2px;height:2px;background:#555;"></div>
<div style="left:494px;top:385.85px;width:14px;height:1.3px;background:transparent;background-image:linear-gradient(90deg,transparent 0.00px,#bbbbbb 0.00px,#bbbbbb 2.96px,transparent 2.96px,transparent 4.36px,#bbbbbb 4.36px,#bbbbbb 7.23px,transparent 7.23px,transparent 8.63px,#bbbbbb 8.63px,#bbbbbb 13.63px,transparent 13.63px)"></div>
<div style="left:520px;top:385.5px;width:2px;height:2px;background:#555;"></div>
<div style="left:458px;top:389.35px;width:17px;height:1.3px;background:transparent;background-image:linear-gradient(90deg,transparent 0.00px,#bbbbbb 0.00px,#bbbbbb 5.54px,transparent 5.54px,transparent 6.99px,#bbbbbb 6.99px,#bbbbbb 10.96px,transparent 10.96px,transparent 11.85px,#bbbbbb 11.85px,#bbbbbb 17.00px,transparent 17.00px)"></div>
<div style="left:488px;top:389.0px;width:2px;height:2px;background:#555;"></div>
<div style="left:494px;top:389.35px;width:17px;height:1.3px;background:transparent;background-image:linear-gradient(90deg,transparent 0.00px,#bbbbbb 0.00px,#bbbbbb 3.10px,transparent 3.10px,transparent 4.01px,#bbbbbb 4.01px,#bbbbbb 6.79px,transparent 6.79px,transparent 7.73px,#bbbbbb 7.73px,#bbbbbb 11.95px,transparent 11.95px,transparent 12.96px,#bbbbbb 12.96px,#bbbbbb 17.00px,transparent 17.00px)"></div>
<div style="left:520px;top:389.0px;width:2px;height:2px;background:#555;"></div>
<div style="left:361px;top:406px;width:70px;height:1.5px;background:#222;"></div>
<div style="left:363px;top:408.35px;width:24px;height:1.5px;background:transparent;background-image:linear-gradient(90deg,transparent 0.00px,#777777 0.00px,#777777 5.25px,transparent 5.25px,transparent 6.18px,#777777 6.18px,#777777 10.58px,transparent 10.58px,transparent 11.40px,#777777 11.40px,#777777 15.27px,transparent 15.27px,transparent 16.08px,#777777 16.08px,#777777 22.62px,transparent 22.62px,transparent 23.80px,#777777 23.80px,#777777 24.00px,transparent 24.00px)"></div>
<div style="left:367px;top:411.85px;width:22px;height:1.3px;background:transparent;background-image:linear-gradient(90deg,transparent 0.00px,#bbbbbb 0.00px,#bbbbbb 7.64px,transparent 7.64px,transparent 8.51px,#bbbbbb 8.51px,#bbbbbb 15.52px,transparent 15.52px,transparent 16.62px,#bbbbbb 16.62px,#bbbbbb 21.84px,transparent 21.84px)"></div>
<div style="left:421px;top:411.85px;width:10px;height:1.3px;background:transparent;background-image:linear-gradient(90deg,transparent 0.00px,#c8c8c8 0.00px,#c8c8c8 4.66px,transparent 4.66px,transparent 5.82px,#c8c8c8 5.82px,#c8c8c8 10.00px,transparent 10.00px)"></div>
<div style="left:367px;top:415.35px;width:16px;height:1.3px;background:transparent;background-image:linear-gradient(90deg,transparent 0.00px,#bbbbbb 0.00px,#bbbbbb 4.38px,transparent 4.38px,transparent 5.77px,#bbbbbb 5.77px,#bbbbbb 12.15px,transparent 12.15px,transparent 13.40px,#bbbbbb 13.40px,#bbbbbb 16.00px,transparent 16.00px)"></div>
<div style="left:421px;top:415.35px;width:10px;height:1.3px;background:transparent;background-image:linear-gradient(90deg,transparent 0.00px,#adadad 0.00px,#adadad 2.80px,transparent 2.80px,transparent 3.69px,#adadad 3.69px,#adadad 6.58px,transparent 6.58px,transparent 7.90px,#adadad 7.90px,#adadad 10.00px,transparent 10.00px)"></div>
<div style="left:367px;top:418.85px;width:24px;height:1.3px;background:transparent;background-image:linear-gradient(90deg,transparent 0.00px,#bbbbbb 0.00px,#bbbbbb 2.96px,transparent 2.96px,transparent 4.35px,#bbbbbb 4.35px,#bbbbbb 11.64px,transparent 11.64px,transparent 12.91px,#bbbbbb 12.91px,#bbbbbb 16.96px,transparent 16.96px,transparent 17.93px,#bbbbbb 17.93px,#bbbbbb 22.04px,transparent 22.04px,transparent 23.16px,#bbbbbb 23.16px,#bbbbbb 24.00px,transparent 24.00px)"></div>
<div style="left:421px;top:418.85px;width:10px;height:1.3px;background:transparent;background-image:linear-gradient(90deg,transparent 0.00px,#adadad 0.00px,#adadad 3.95px,transparent 3.95px,transparent 5.42px,#adadad 5.42px,#adadad 10.00px,transparent 10.00px)"></div>
<div style="left:366px;top:422px;width:67px;height:1.5px;background:#666;"></div>
<div style="left:363px;top:431.85px;width:18px;height:1.3px;background:transparent;background-image:linear-gradient(90deg,transparent 0.00px,#9f9f9f 0.00px,#9f9f9f 3.84px,transparent 3.84px,transparent 5.32px,#9f9f9f 5.32px,#9f9f9f 9.52px,transparent 9.52px,transparent 10.57px,#9f9f9f 10.57px,#9f9f9f 13.08px,transparent 13.08px,transparent 14.15px,#9f9f9f 14.15px,#9f9f9f 18.00px,transparent 18.00px)"></div>
<div style="left:367px;top:436.35px;width:55px;height:1.3px;background:transparent;background-image:linear-gradient(90deg,transparent 0.00px,#bbbbbb 0.00px,#bbbbbb 3.61px,transparent 3.61px,transparent 4.76px,#bbbbbb 4.76px,#bbbbbb 7.29px,transparent 7.29px,transparent 8.27px,#bbbbbb 8.27px,#bbbbbb 11.26px,transparent 11.26px,transparent 12.34px,#bbbbbb 12.34px,#bbbbbb 15.07px,transparent 15.07px,transparent 15.89px,#bbbbbb 15.89px,#bbbbbb 20.06px,transparent 20.06px,transparent 21.03px,#bbbbbb 21.03px,#bbbbbb 26.75px,transparent 26.75px,transparent 27.92px,#bbbbbb 27.92px,#bbbbbb 34.54px,transparent 34.54px,transparent 35.80px,#bbbbbb 35.80px,#bbbbbb 42.24px,transparent 42.24px,transparent 43.66px,#bbbbbb 43.66px,#bbbbbb 48.30px,transparent 48.30px,transparent 49.33px,#bbbbbb 49.33px,#bbbbbb 55.00px,transparent 55.00px)"></div>
<div style="left:369px;top:439.85px;width:25px;height:1.3px;background:transparent;background-image:linear-gradient(90deg,transparent 0.00px,#bbbbbb 0.00px,#bbbbbb 6.48px,transparent 6.48px,transparent 7.73px,#bbbbbb 7.73px,#bbbbbb 10.47px,transparent 10.47px,transparent 11.86px,#bbbbbb 11.86px,#bbbbbb 19.26px,transparent 19.26px,transparent 20.50px,#bbbbbb 20.50px,#bbbbbb 25.00px,transparent 25.00px)"></div>
<div style="left:369px;top:442.85px;width:30px;height:1.3px;background:transparent;background-image:linear-gradient(90deg,transparent 0.00px,#bbbbbb 0.00px,#bbbbbb 3.27px,transparent 3.27px,transparent 4.43px,#bbbbbb 4.43px,#bbbbbb 9.71px,transparent 9.71px,transparent 11.09px,#bbbbbb 11.09px,#bbbbbb 18.02px,transparent 18.02px,transparent 19.40px,#bbbbbb 19.40px,#bbbbbb 25.11px,transparent 25.11px,transparent 26.53px,#bbbbbb 26.53px,#bbbbbb 30.00px,transparent 30.00px)"></div>
<div style="left:456px;top:406px;width:1px;height:20px;background:#333;"></div>
<div style="left:459px;top:407.85px;width:28px;height:1.3px;background:transparent;background-image:linear-gradient(90deg,transparent 0.00px,#adadad 0.00px,#adadad 3.76px,transparent 3.76px,transparent 4.59px,#adadad 4.59px,#adadad 7.82px,transparent 7.82px,transparent 8.87px,#adadad 8.87px,#adadad 11.95px,transparent 11.95px,transparent 13.33px,#adadad 13.33px,#adadad 18.91px,transparent 18.91px,transparent 20.14px,#adadad 20.14px,#adadad 26.09px,transparent 26.09px,transparent 27.37px,#adadad 27.37px,#adadad 28.00px,transparent 28.00px)"></div>
<div style="left:459px;top:411.85px;width:18px;height:1.3px;background:transparent;background-image:linear-gradient(90deg,transparent 0.00px,#9f9f9f 0.00px,#9f9f9f 6.89px,transparent 6.89px,transparent 8.21px,#9f9f9f 8.21px,#9f9f9f 13.48px,transparent 13.48px,transparent 14.65px,#9f9f9f 14.65px,#9f9f9f 18.00px,transparent 18.00px)"></div>
<div style="left:459px;top:415.85px;width:40px;height:1.3px;background:transparent;background-image:linear-gradient(90deg,transparent 0.00px,#bbbbbb 0.00px,#bbbbbb 6.55px,transparent 6.55px,transparent 7.53px,#bbbbbb 7.53px,#bbbbbb 10.44px,transparent 10.44px,transparent 11.42px,#bbbbbb 11.42px,#bbbbbb 17.94px,transparent 17.94px,transparent 18.88px,#bbbbbb 18.88px,#bbbbbb 25.45px,transparent 25.45px,transparent 26.93px,#bbbbbb 26.93px,#bbbbbb 32.15px,transparent 32.15px,transparent 33.22px,#bbbbbb 33.22px,#bbbbbb 38.35px,transparent 38.35px,transparent 39.63px,#bbbbbb 39.63px,#bbbbbb 40.00px,transparent 40.00px)"></div>
<div style="left:459px;top:419.35px;width:20px;height:1.3px;background:transparent;background-image:linear-gradient(90deg,transparent 0.00px,#c8c8c8 0.00px,#c8c8c8 6.04px,transparent 6.04px,transparent 6.89px,#c8c8c8 6.89px,#c8c8c8 10.20px,transparent 10.20px,transparent 11.18px,#c8c8c8 11.18px,#c8c8c8 17.77px,transparent 17.77px,transparent 18.78px,#c8c8c8 18.78px,#c8c8c8 20.00px,transparent 20.00px)"></div>
<div style="left:459px;top:422.85px;width:26px;height:1.3px;background:transparent;background-image:linear-gradient(90deg,transparent 0.00px,#848484 0.00px,#848484 2.83px,transparent 2.83px,transparent 3.82px,#848484 3.82px,#848484 10.02px,transparent 10.02px,transparent 11.30px,#848484 11.30px,#848484 17.52px,transparent 17.52px,transparent 18.52px,#848484 18.52px,#848484 23.86px,transparent 23.86px,transparent 24.99px,#848484 24.99px,#848484 26.00px,transparent 26.00px)"></div>
<div style="left:555px;top:269.35px;width:76px;height:1.3px;background:transparent;background-image:linear-gradient(90deg,transparent 0.00px,#9f9f9f 0.00px,#9f9f9f 7.42px,transparent 7.42px,transparent 8.35px,#9f9f9f 8.35px,#9f9f9f 16.23px,transparent 16.23px,transparent 17.69px,#9f9f9f 17.69px,#9f9f9f 20.29px,transparent 20.29px,transparent 21.41px,#9f9f9f 21.41px,#9f9f9f 28.42px,transparent 28.42px,transparent 29.89px,#9f9f9f 29.89px,#9f9f9f 34.87px,transparent 34.87px,transparent 35.85px,#9f9f9f 35.85px,#9f9f9f 39.51px,transparent 39.51px,transparent 40.97px,#9f9f9f 40.97px,#9f9f9f 44.63px,transparent 44.63px,transparent 45.84px,#9f9f9f 45.84px,#9f9f9f 49.12px,transparent 49.12px,transparent 50.28px,#9f9f9f 50.28px,#9f9f9f 58.02px,transparent 58.02px,transparent 58.92px,#9f9f9f 58.92px,#9f9f9f 65.93px,transparent 65.93px,transparent 67.08px,#9f9f9f 67.08px,#9f9f9f 74.46px,transparent 74.46px,transparent 75.75px,#9f9f9f 75.75px,#9f9f9f 76.00px,transparent 76.00px)"></div>
<div style="left:697px;top:268px;width:17px;height:17px;background:#b3202a;"></div>
<span class="t" style="left:698.5px;top:272.5px;font-size:3.4px;color:#f2c21a;font-weight:bold;line-height:1.2">WELLS<br>FARGO</span>
<div style="left:555px;top:288.5px;width:160px;height:1.5px;background:#333;"></div>
<span class="t" style="left:557px;top:294.69px;font-size:5.2px;color:#1a1a1a;font-weight:bold;;transform:scaleX(0.6462);transform-origin:0 0">Transaction history</span>
<div style="left:562px;top:304.5px;width:8px;height:1px;background:#c8c8c8;"></div>
<div style="left:676px;top:304.35px;width:10px;height:1.3px;background:transparent;background-image:linear-gradient(90deg,transparent 0.00px,#d6d6d6 0.00px,#d6d6d6 5.17px,transparent 5.17px,transparent 5.99px,#d6d6d6 5.99px,#d6d6d6 8.51px,transparent 8.51px,transparent 9.66px,#d6d6d6 9.66px,#d6d6d6 10.00px,transparent 10.00px)"></div>
<div style="left:691px;top:304.35px;width:12px;height:1.3px;background:transparent;background-image:linear-gradient(90deg,transparent 0.00px,#d6d6d6 0.00px,#d6d6d6 3.27px,transparent 3.27px,transparent 4.31px,#d6d6d6 4.31px,#d6d6d6 8.55px,transparent 8.55px,transparent 9.94px,#d6d6d6 9.94px,#d6d6d6 12.00px,transparent 12.00px)"></div>
<div style="left:563px;top:308.5px;width:152px;height:1.2px;background:#222;"></div>
<div style="left:563px;top:313.5px;width:152px;height:1.2px;background:#222;"></div>
<div style="left:563px;top:329px;width:152px;height:1.2px;background:#222;"></div>
<div style="left:563px;top:341px;width:152px;height:1.2px;background:#222;"></div>
<div style="left:563px;top:349.5px;width:152px;height:1px;background:#222;"></div>
<div style="left:563px;top:352.2px;width:152px;height:1px;background:#222;"></div>
<div style="left:563px;top:355.4px;width:152px;height:1.8px;background:#222;"></div>
<div style="left:563px;top:310.5px;width:6px;height:1px;background:#adadad;"></div>
<div style="left:576px;top:310.5px;width:4px;height:1px;background:#adadad;"></div>
<div style="left:590px;top:310.35px;width:45px;height:1.3px;background:transparent;background-image:linear-gradient(90deg,transparent 0.00px,#adadad 0.00px,#adadad 7.12px,transparent 7.12px,transparent 8.00px,#adadad 8.00px,#adadad 15.59px,transparent 15.59px,transparent 16.89px,#adadad 16.89px,#adadad 24.35px,transparent 24.35px,transparent 25.35px,#adadad 25.35px,#adadad 29.90px,transparent 29.90px,transparent 30.98px,#adadad 30.98px,#adadad 38.97px,transparent 38.97px,transparent 40.18px,#adadad 40.18px,#adadad 44.67px,transparent 44.67px)"></div>
<div style="left:680px;top:310.35px;width:10px;height:1.3px;background:transparent;background-image:linear-gradient(90deg,transparent 0.00px,#adadad 0.00px,#adadad 4.01px,transparent 4.01px,transparent 4.85px,#adadad 4.85px,#adadad 7.91px,transparent 7.91px,transparent 9.29px,#adadad 9.29px,#adadad 10.00px,transparent 10.00px)"></div>
<div style="left:706px;top:310.5px;width:9px;height:1px;background:#adadad;"></div>
<div style="left:564px;top:316px;width:5px;height:1px;background:#adadad;"></div>
<div style="left:591px;top:315.85px;width:50px;height:1.3px;background:transparent;background-image:linear-gradient(90deg,transparent 0.00px,#adadad 0.00px,#adadad 3.87px,transparent 3.87px,transparent 4.86px,#adadad 4.86px,#adadad 10.17px,transparent 10.17px,transparent 11.10px,#adadad 11.10px,#adadad 15.65px,transparent 15.65px,transparent 17.12px,#adadad 17.12px,#adadad 24.49px,transparent 24.49px,transparent 25.86px,#adadad 25.86px,#adadad 31.82px,transparent 31.82px,transparent 33.26px,#adadad 33.26px,#adadad 40.94px,transparent 40.94px,transparent 42.12px,#adadad 42.12px,#adadad 48.58px,transparent 48.58px,transparent 49.41px,#adadad 49.41px,#adadad 50.00px,transparent 50.00px)"></div>
<div style="left:668px;top:316px;width:6px;height:1px;background:#adadad;"></div>
<div style="left:564px;top:320.5px;width:5px;height:1px;background:#adadad;"></div>
<div style="left:591px;top:320.35px;width:62px;height:1.3px;background:transparent;background-image:linear-gradient(90deg,transparent 0.00px,#adadad 0.00px,#adadad 6.64px,transparent 6.64px,transparent 7.89px,#adadad 7.89px,#adadad 11.96px,transparent 11.96px,transparent 12.80px,#adadad 12.80px,#adadad 20.40px,transparent 20.40px,transparent 21.29px,#adadad 21.29px,#adadad 26.38px,transparent 26.38px,transparent 27.42px,#adadad 27.42px,#adadad 31.56px,transparent 31.56px,transparent 32.88px,#adadad 32.88px,#adadad 40.75px,transparent 40.75px,transparent 41.73px,#adadad 41.73px,#adadad 47.84px,transparent 47.84px,transparent 48.85px,#adadad 48.85px,#adadad 54.41px,transparent 54.41px,transparent 55.49px,#adadad 55.49px,#adadad 58.91px,transparent 58.91px,transparent 59.82px,#adadad 59.82px,#adadad 62.00px,transparent 62.00px)"></div>
<div style="left:700px;top:320.5px;width:8px;height:1px;background:#adadad;"></div>
<div style="left:591px;top:323.85px;width:12px;height:1.3px;background:transparent;background-image:linear-gradient(90deg,transparent 0.00px,#adadad 0.00px,#adadad 5.23px,transparent 5.23px,transparent 6.19px,#adadad 6.19px,#adadad 12.00px,transparent 12.00px)"></div>
<div style="left:564px;top:326px;width:4px;height:1px;background:#adadad;"></div>
<div style="left:591px;top:325.85px;width:30px;height:1.3px;background:transparent;background-image:linear-gradient(90deg,transparent 0.00px,#adadad 0.00px,#adadad 4.97px,transparent 4.97px,transparent 5.87px,#adadad 5.87px,#adadad 9.43px,transparent 9.43px,transparent 10.29px,#adadad 10.29px,#adadad 14.67px,transparent 14.67px,transparent 15.54px,#adadad 15.54px,#adadad 19.35px,transparent 19.35px,transparent 20.33px,#adadad 20.33px,#adadad 25.97px,transparent 25.97px,transparent 27.39px,#adadad 27.39px,#adadad 30.00px,transparent 30.00px)"></div>
<div style="left:656px;top:326px;width:6px;height:1px;background:#adadad;"></div>
<div style="left:564px;top:331px;width:5px;height:1px;background:#adadad;"></div>
<div style="left:591px;top:330.85px;width:40px;height:1.3px;background:transparent;background-image:linear-gradient(90deg,transparent 0.00px,#adadad 0.00px,#adadad 4.78px,transparent 4.78px,transparent 5.94px,#adadad 5.94px,#adadad 10.52px,transparent 10.52px,transparent 11.55px,#adadad 11.55px,#adadad 14.39px,transparent 14.39px,transparent 15.39px,#adadad 15.39px,#adadad 23.21px,transparent 23.21px,transparent 24.10px,#adadad 24.10px,#adadad 29.37px,transparent 29.37px,transparent 30.61px,#adadad 30.61px,#adadad 37.85px,transparent 37.85px,transparent 38.81px,#adadad 38.81px,#adadad 40.00px,transparent 40.00px)"></div>
<div style="left:690px;top:331px;width:8px;height:1px;background:#adadad;"></div>
<div style="left:564px;top:336px;width:5px;height:1px;background:#adadad;"></div>
<div style="left:591px;top:335.85px;width:66px;height:1.3px;background:transparent;background-image:linear-gradient(90deg,transparent 0.00px,#adadad 0.00px,#adadad 4.70px,transparent 4.70px,transparent 5.81px,#adadad 5.81px,#adadad 13.56px,transparent 13.56px,transparent 14.95px,#adadad 14.95px,#adadad 22.25px,transparent 22.25px,transparent 23.07px,#adadad 23.07px,#adadad 25.75px,transparent 25.75px,transparent 27.04px,#adadad 27.04px,#adadad 34.47px,transparent 34.47px,transparent 35.60px,#adadad 35.60px,#adadad 41.33px,transparent 41.33px,transparent 42.13px,#adadad 42.13px,#adadad 46.78px,transparent 46.78px,transparent 48.23px,#adadad 48.23px,#adadad 55.27px,transparent 55.27px,transparent 56.67px,#adadad 56.67px,#adadad 64.52px,transparent 64.52px,transparent 65.49px,#adadad 65.49px,#adadad 66.00px,transparent 66.00px)"></div>
<div style="left:672px;top:336px;width:6px;height:1px;background:#adadad;"></div>
<div style="left:700px;top:335.85px;width:10px;height:1.3px;background:transparent;background-image:linear-gradient(90deg,transparent 0.00px,#adadad 0.00px,#adadad 5.37px,transparent 5.37px,transparent 6.65px,#adadad 6.65px,#adadad 10.00px,transparent 10.00px)"></div>
<div style="left:591px;top:338.85px;width:40px;height:1.3px;background:transparent;background-image:linear-gradient(90deg,transparent 0.00px,#adadad 0.00px,#adadad 6.06px,transparent 6.06px,transparent 7.40px,#adadad 7.40px,#adadad 12.41px,transparent 12.41px,transparent 13.60px,#adadad 13.60px,#adadad 16.31px,transparent 16.31px,transparent 17.66px,#adadad 17.66px,#adadad 21.44px,transparent 21.44px,transparent 22.89px,#adadad 22.89px,#adadad 28.94px,transparent 28.94px,transparent 29.95px,#adadad 29.95px,#adadad 33.15px,transparent 33.15px,transparent 34.13px,#adadad 34.13px,#adadad 40.00px,transparent 40.00px)"></div>
<div style="left:564px;top:344px;width:5px;height:1px;background:#adadad;"></div>
<div style="left:591px;top:343.85px;width:66px;height:1.3px;background:transparent;background-image:linear-gradient(90deg,transparent 0.00px,#adadad 0.00px,#adadad 3.12px,transparent 3.12px,transparent 3.97px,#adadad 3.97px,#adadad 9.35px,transparent 9.35px,transparent 10.56px,#adadad 10.56px,#adadad 15.19px,transparent 15.19px,transparent 16.15px,#adadad 16.15px,#adadad 21.96px,transparent 21.96px,transparent 22.76px,#adadad 22.76px,#adadad 26.92px,transparent 26.92px,transparent 28.04px,#adadad 28.04px,#adadad 35.82px,transparent 35.82px,transparent 37.07px,#adadad 37.07px,#adadad 44.43px,transparent 44.43px,transparent 45.56px,#adadad 45.56px,#adadad 49.35px,transparent 49.35px,transparent 50.33px,#adadad 50.33px,#adadad 58.11px,transparent 58.11px,transparent 59.40px,#adadad 59.40px,#adadad 63.59px,transparent 63.59px,transparent 64.41px,#adadad 64.41px,#adadad 66.00px,transparent 66.00px)"></div>
<div style="left:690px;top:344px;width:8px;height:1px;background:#adadad;"></div>
<div style="left:591px;top:346.85px;width:30px;height:1.3px;background:transparent;background-image:linear-gradient(90deg,transparent 0.00px,#adadad 0.00px,#adadad 4.81px,transparent 4.81px,transparent 5.79px,#adadad 5.79px,#adadad 11.96px,transparent 11.96px,transparent 13.41px,#adadad 13.41px,#adadad 17.16px,transparent 17.16px,transparent 17.98px,#adadad 17.98px,#adadad 22.34px,transparent 22.34px,transparent 23.43px,#adadad 23.43px,#adadad 29.69px,transparent 29.69px)"></div>
<div style="left:591px;top:350.85px;width:40px;height:1.3px;background:transparent;background-image:linear-gradient(90deg,transparent 0.00px,#adadad 0.00px,#adadad 6.88px,transparent 6.88px,transparent 8.20px,#adadad 8.20px,#adadad 13.48px,transparent 13.48px,transparent 14.42px,#adadad 14.42px,#adadad 22.26px,transparent 22.26px,transparent 23.27px,#adadad 23.27px,#adadad 30.28px,transparent 30.28px,transparent 31.25px,#adadad 31.25px,#adadad 34.96px,transparent 34.96px,transparent 36.30px,#adadad 36.30px,#adadad 40.00px,transparent 40.00px)"></div>
<div style="left:690px;top:351px;width:8px;height:1px;background:#adadad;"></div>
<div style="left:563px;top:353.85px;width:20px;height:1.3px;background:transparent;background-image:linear-gradient(90deg,transparent 0.00px,#adadad 0.00px,#adadad 5.23px,transparent 5.23px,transparent 6.16px,#adadad 6.16px,#adadad 9.89px,transparent 9.89px,transparent 10.98px,#adadad 10.98px,#adadad 17.14px,transparent 17.14px,transparent 18.60px,#adadad 18.60px,#adadad 20.00px,transparent 20.00px)"></div>
<div style="left:664px;top:354px;width:8px;height:1px;background:#adadad;"></div>
<div style="left:690px;top:354px;width:8px;height:1px;background:#adadad;"></div>
<div style="left:564px;top:357.5px;width:6px;height:1px;background:#adadad;"></div>
<div style="left:666px;top:357.5px;width:8px;height:1px;background:#adadad;"></div>
<div style="left:690px;top:357.5px;width:8px;height:1px;background:#adadad;"></div>
<div style="left:564px;top:361.35px;width:150px;height:1.3px;background:transparent;background-image:linear-gradient(90deg,transparent 0.00px,#bbbbbb 0.00px,#bbbbbb 3.67px,transparent 3.67px,transparent 5.15px,#bbbbbb 5.15px,#bbbbbb 8.43px,transparent 8.43px,transparent 9.27px,#bbbbbb 9.27px,#bbbbbb 12.10px,transparent 12.10px,transparent 13.18px,#bbbbbb 13.18px,#bbbbbb 20.62px,transparent 20.62px,transparent 22.03px,#bbbbbb 22.03px,#bbbbbb 28.56px,transparent 28.56px,transparent 30.06px,#bbbbbb 30.06px,#bbbbbb 37.69px,transparent 37.69px,transparent 38.72px,#bbbbbb 38.72px,#bbbbbb 42.24px,transparent 42.24px,transparent 43.69px,#bbbbbb 43.69px,#bbbbbb 50.30px,transparent 50.30px,transparent 51.12px,#bbbbbb 51.12px,#bbbbbb 57.27px,transparent 57.27px,transparent 58.34px,#bbbbbb 58.34px,#bbbbbb 62.90px,transparent 62.90px,transparent 63.93px,#bbbbbb 63.93px,#bbbbbb 67.36px,transparent 67.36px,transparent 68.16px,#bbbbbb 68.16px,#bbbbbb 72.20px,transparent 72.20px,transparent 73.25px,#bbbbbb 73.25px,#bbbbbb 81.00px,transparent 81.00px,transparent 81.89px,#bbbbbb 81.89px,#bbbbbb 89.69px,transparent 89.69px,transparent 90.64px,#bbbbbb 90.64px,#bbbbbb 95.10px,transparent 95.10px,transparent 96.47px,#bbbbbb 96.47px,#bbbbbb 103.49px,transparent 103.49px,transparent 104.60px,#bbbbbb 104.60px,#bbbbbb 107.37px,transparent 107.37px,transparent 108.50px,#bbbbbb 108.50px,#bbbbbb 113.05px,transparent 113.05px,transparent 114.49px,#bbbbbb 114.49px,#bbbbbb 118.05px,transparent 118.05px,transparent 119.11px,#bbbbbb 119.11px,#bbbbbb 126.54px,transparent 126.54px,transparent 127.36px,#bbbbbb 127.36px,#bbbbbb 132.12px,transparent 132.12px,transparent 133.49px,#bbbbbb 133.49px,#bbbbbb 140.21px,transparent 140.21px,transparent 141.04px,#bbbbbb 141.04px,#bbbbbb 143.73px,transparent 143.73px,transparent 144.57px,#bbbbbb 144.57px,#bbbbbb 150.00px,transparent 150.00px)"></div>
<div style="left:564px;top:364.35px;width:60px;height:1.3px;background:transparent;background-image:linear-gradient(90deg,transparent 0.00px,#c8c8c8 0.00px,#c8c8c8 6.61px,transparent 6.61px,transparent 8.04px,#c8c8c8 8.04px,#c8c8c8 12.40px,transparent 12.40px,transparent 13.39px,#c8c8c8 13.39px,#c8c8c8 21.16px,transparent 21.16px,transparent 22.39px,#c8c8c8 22.39px,#c8c8c8 26.34px,transparent 26.34px,transparent 27.64px,#c8c8c8 27.64px,#c8c8c8 31.88px,transparent 31.88px,transparent 32.87px,#c8c8c8 32.87px,#c8c8c8 35.39px,transparent 35.39px,transparent 36.72px,#c8c8c8 36.72px,#c8c8c8 44.26px,transparent 44.26px,transparent 45.50px,#c8c8c8 45.50px,#c8c8c8 53.19px,transparent 53.19px,transparent 54.01px,#c8c8c8 54.01px,#c8c8c8 57.80px,transparent 57.80px,transparent 58.93px,#c8c8c8 58.93px,#c8c8c8 60.00px,transparent 60.00px)"></div>
<div style="left:560px;top:377.35px;width:20px;height:1.3px;background:transparent;background-image:linear-gradient(90deg,transparent 0.00px,#9f9f9f 0.00px,#9f9f9f 4.63px,transparent 4.63px,transparent 5.60px,#9f9f9f 5.60px,#9f9f9f 10.47px,transparent 10.47px,transparent 11.61px,#9f9f9f 11.61px,#9f9f9f 19.22px,transparent 19.22px)"></div>
<div style="left:583px;top:377.35px;width:54px;height:1.3px;background:transparent;background-image:linear-gradient(90deg,transparent 0.00px,#c8c8c8 0.00px,#c8c8c8 6.91px,transparent 6.91px,transparent 8.23px,#c8c8c8 8.23px,#c8c8c8 15.26px,transparent 15.26px,transparent 16.60px,#c8c8c8 16.60px,#c8c8c8 22.44px,transparent 22.44px,transparent 23.47px,#c8c8c8 23.47px,#c8c8c8 27.72px,transparent 27.72px,transparent 28.78px,#c8c8c8 28.78px,#c8c8c8 35.58px,transparent 35.58px,transparent 36.44px,#c8c8c8 36.44px,#c8c8c8 40.02px,transparent 40.02px,transparent 41.35px,#c8c8c8 41.35px,#c8c8c8 45.21px,transparent 45.21px,transparent 46.05px,#c8c8c8 46.05px,#c8c8c8 48.74px,transparent 48.74px,transparent 49.93px,#c8c8c8 49.93px,#c8c8c8 54.00px,transparent 54.00px)"></div>
<div style="left:564px;top:383px;width:45px;height:1.5px;background:#777;"></div>
<div style="left:615px;top:383px;width:50px;height:1.5px;background:#777;"></div>
<div style="left:674px;top:383px;width:41px;height:1.5px;background:#777;"></div>
<div style="left:563px;top:389.35px;width:22px;height:1.3px;background:transparent;background-image:linear-gradient(90deg,transparent 0.00px,#c8c8c8 0.00px,#c8c8c8 7.36px,transparent 7.36px,transparent 8.85px,#c8c8c8 8.85px,#c8c8c8 12.81px,transparent 12.81px,transparent 13.67px,#c8c8c8 13.67px,#c8c8c8 16.70px,transparent 16.70px,transparent 17.85px,#c8c8c8 17.85px,#c8c8c8 22.00px,transparent 22.00px)"></div>
<div style="left:560px;top:393.85px;width:24px;height:1.5px;background:transparent;background-image:linear-gradient(90deg,transparent 0.00px,#848484 0.00px,#848484 3.79px,transparent 3.79px,transparent 4.88px,#848484 4.88px,#848484 10.79px,transparent 10.79px,transparent 12.06px,#848484 12.06px,#848484 18.68px,transparent 18.68px,transparent 20.07px,#848484 20.07px,#848484 24.00px,transparent 24.00px)"></div>
<div style="left:560px;top:397.35px;width:126px;height:1.3px;background:transparent;background-image:linear-gradient(90deg,transparent 0.00px,#bbbbbb 0.00px,#bbbbbb 7.12px,transparent 7.12px,transparent 8.13px,#bbbbbb 8.13px,#bbbbbb 13.75px,transparent 13.75px,transparent 14.81px,#bbbbbb 14.81px,#bbbbbb 21.37px,transparent 21.37px,transparent 22.31px,#bbbbbb 22.31px,#bbbbbb 26.17px,transparent 26.17px,transparent 27.14px,#bbbbbb 27.14px,#bbbbbb 30.48px,transparent 30.48px,transparent 31.90px,#bbbbbb 31.90px,#bbbbbb 37.58px,transparent 37.58px,transparent 38.61px,#bbbbbb 38.61px,#bbbbbb 43.29px,transparent 43.29px,transparent 44.79px,#bbbbbb 44.79px,#bbbbbb 50.08px,transparent 50.08px,transparent 51.04px,#bbbbbb 51.04px,#bbbbbb 57.98px,transparent 57.98px,transparent 59.24px,#bbbbbb 59.24px,#bbbbbb 67.19px,transparent 67.19px,transparent 68.06px,#bbbbbb 68.06px,#bbbbbb 73.17px,transparent 73.17px,transparent 74.55px,#bbbbbb 74.55px,#bbbbbb 81.67px,transparent 81.67px,transparent 83.11px,#bbbbbb 83.11px,#bbbbbb 85.83px,transparent 85.83px,transparent 86.84px,#bbbbbb 86.84px,#bbbbbb 89.99px,transparent 89.99px,transparent 90.93px,#bbbbbb 90.93px,#bbbbbb 98.78px,transparent 98.78px,transparent 99.99px,#bbbbbb 99.99px,#bbbbbb 107.60px,transparent 107.60px,transparent 108.66px,#bbbbbb 108.66px,#bbbbbb 115.93px,transparent 115.93px,transparent 117.04px,#bbbbbb 117.04px,#bbbbbb 120.97px,transparent 120.97px,transparent 122.31px,#bbbbbb 122.31px,#bbbbbb 126.00px,transparent 126.00px)"></div>
<div style="left:560px;top:399.85px;width:126px;height:1.3px;background:transparent;background-image:linear-gradient(90deg,transparent 0.00px,#bbbbbb 0.00px,#bbbbbb 5.78px,transparent 5.78px,transparent 7.01px,#bbbbbb 7.01px,#bbbbbb 10.71px,transparent 10.71px,transparent 11.77px,#bbbbbb 11.77px,#bbbbbb 15.05px,transparent 15.05px,transparent 15.99px,#bbbbbb 15.99px,#bbbbbb 19.89px,transparent 19.89px,transparent 21.11px,#bbbbbb 21.11px,#bbbbbb 27.19px,transparent 27.19px,transparent 28.14px,#bbbbbb 28.14px,#bbbbbb 30.70px,transparent 30.70px,transparent 31.73px,#bbbbbb 31.73px,#bbbbbb 37.96px,transparent 37.96px,transparent 38.89px,#bbbbbb 38.89px,#bbbbbb 43.11px,transparent 43.11px,transparent 44.05px,#bbbbbb 44.05px,#bbbbbb 50.92px,transparent 50.92px,transparent 52.11px,#bbbbbb 52.11px,#bbbbbb 54.95px,transparent 54.95px,transparent 55.82px,#bbbbbb 55.82px,#bbbbbb 60.50px,transparent 60.50px,transparent 61.68px,#bbbbbb 61.68px,#bbbbbb 67.70px,transparent 67.70px,transparent 68.56px,#bbbbbb 68.56px,#bbbbbb 71.96px,transparent 71.96px,transparent 73.25px,#bbbbbb 73.25px,#bbbbbb 78.00px,transparent 78.00px,transparent 79.00px,#bbbbbb 79.00px,#bbbbbb 83.19px,transparent 83.19px,transparent 84.66px,#bbbbbb 84.66px,#bbbbbb 88.88px,transparent 88.88px,transparent 90.08px,#bbbbbb 90.08px,#bbbbbb 94.54px,transparent 94.54px,transparent 95.63px,#bbbbbb 95.63px,#bbbbbb 102.89px,transparent 102.89px,transparent 104.38px,#bbbbbb 104.38px,#bbbbbb 108.88px,transparent 108.88px,transparent 109.82px,#bbbbbb 109.82px,#bbbbbb 116.33px,transparent 116.33px,transparent 117.27px,#bbbbbb 117.27px,#bbbbbb 119.80px,transparent 119.80px,transparent 121.23px,#bbbbbb 121.23px,#bbbbbb 126.00px,transparent 126.00px)"></div>
<div style="left:560px;top:402.35px;width:30px;height:1.3px;background:transparent;background-image:linear-gradient(90deg,transparent 0.00px,#c8c8c8 0.00px,#c8c8c8 4.73px,transparent 4.73px,transparent 6.15px,#c8c8c8 6.15px,#c8c8c8 11.19px,transparent 11.19px,transparent 12.10px,#c8c8c8 12.10px,#c8c8c8 14.68px,transparent 14.68px,transparent 15.87px,#c8c8c8 15.87px,#c8c8c8 21.89px,transparent 21.89px,transparent 23.33px,#c8c8c8 23.33px,#c8c8c8 26.32px,transparent 26.32px,transparent 27.55px,#c8c8c8 27.55px,#c8c8c8 30.00px,transparent 30.00px)"></div>
<div style="left:562px;top:406.35px;width:25px;height:1.3px;background:transparent;background-image:linear-gradient(90deg,transparent 0.00px,#929292 0.00px,#929292 3.30px,transparent 3.30px,transparent 4.30px,#929292 4.30px,#929292 9.67px,transparent 9.67px,transparent 11.11px,#929292 11.11px,#929292 14.21px,transparent 14.21px,transparent 15.36px,#929292 15.36px,#929292 22.28px,transparent 22.28px,transparent 23.76px,#929292 23.76px,#929292 25.00px,transparent 25.00px)"></div>
<div style="left:642px;top:406.35px;width:24px;height:1.3px;background:transparent;background-image:linear-gradient(90deg,transparent 0.00px,#9f9f9f 0.00px,#9f9f9f 7.69px,transparent 7.69px,transparent 9.17px,#9f9f9f 9.17px,#9f9f9f 14.32px,transparent 14.32px,transparent 15.16px,#9f9f9f 15.16px,#9f9f9f 22.76px,transparent 22.76px,transparent 23.83px,#9f9f9f 23.83px,#9f9f9f 24.00px,transparent 24.00px)"></div>
<div style="left:690px;top:406.35px;width:18px;height:1.3px;background:transparent;background-image:linear-gradient(90deg,transparent 0.00px,#9f9f9f 0.00px,#9f9f9f 7.04px,transparent 7.04px,transparent 7.95px,#9f9f9f 7.95px,#9f9f9f 14.77px,transparent 14.77px,transparent 15.72px,#9f9f9f 15.72px,#9f9f9f 18.00px,transparent 18.00px)"></div>
<div style="left:560px;top:408px;width:155px;height:1px;background:#555;"></div>
<div style="left:563px;top:411.35px;width:30px;height:1.3px;background:transparent;background-image:linear-gradient(90deg,transparent 0.00px,#bbbbbb 0.00px,#bbbbbb 7.06px,transparent 7.06px,transparent 7.99px,#bbbbbb 7.99px,#bbbbbb 11.69px,transparent 11.69px,transparent 12.77px,#bbbbbb 12.77px,#bbbbbb 18.12px,transparent 18.12px,transparent 19.19px,#bbbbbb 19.19px,#bbbbbb 22.36px,transparent 22.36px,transparent 23.33px,#bbbbbb 23.33px,#bbbbbb 29.82px,transparent 29.82px)"></div>
<div style="left:664px;top:411.35px;width:16px;height:1.3px;background:transparent;background-image:linear-gradient(90deg,transparent 0.00px,#c8c8c8 0.00px,#c8c8c8 2.73px,transparent 2.73px,transparent 3.92px,#c8c8c8 3.92px,#c8c8c8 10.59px,transparent 10.59px,transparent 11.41px,#c8c8c8 11.41px,#c8c8c8 16.00px,transparent 16.00px)"></div>
<div style="left:698px;top:411.35px;width:14px;height:1.3px;background:transparent;background-image:linear-gradient(90deg,transparent 0.00px,#c8c8c8 0.00px,#c8c8c8 5.80px,transparent 5.80px,transparent 6.98px,#c8c8c8 6.98px,#c8c8c8 12.93px,transparent 12.93px,transparent 13.95px,#c8c8c8 13.95px,#c8c8c8 14.00px,transparent 14.00px)"></div>
<div style="left:563px;top:414.35px;width:45px;height:1.3px;background:transparent;background-image:linear-gradient(90deg,transparent 0.00px,#c8c8c8 0.00px,#c8c8c8 4.84px,transparent 4.84px,transparent 6.10px,#c8c8c8 6.10px,#c8c8c8 11.06px,transparent 11.06px,transparent 12.17px,#c8c8c8 12.17px,#c8c8c8 14.80px,transparent 14.80px,transparent 16.03px,#c8c8c8 16.03px,#c8c8c8 21.22px,transparent 21.22px,transparent 22.19px,#c8c8c8 22.19px,#c8c8c8 28.89px,transparent 28.89px,transparent 30.23px,#c8c8c8 30.23px,#c8c8c8 35.25px,transparent 35.25px,transparent 36.18px,#c8c8c8 36.18px,#c8c8c8 41.28px,transparent 41.28px,transparent 42.16px,#c8c8c8 42.16px,#c8c8c8 45.00px,transparent 45.00px)"></div>
<div style="left:563px;top:416.5px;width:2px;height:2px;background:#777;"></div>
<div style="left:567px;top:416.85px;width:40px;height:1.3px;background:transparent;background-image:linear-gradient(90deg,transparent 0.00px,#bbbbbb 0.00px,#bbbbbb 3.00px,transparent 3.00px,transparent 4.11px,#bbbbbb 4.11px,#bbbbbb 9.42px,transparent 9.42px,transparent 10.25px,#bbbbbb 10.25px,#bbbbbb 16.25px,transparent 16.25px,transparent 17.11px,#bbbbbb 17.11px,#bbbbbb 23.64px,transparent 23.64px,transparent 24.98px,#bbbbbb 24.98px,#bbbbbb 30.30px,transparent 30.30px,transparent 31.14px,#bbbbbb 31.14px,#bbbbbb 36.41px,transparent 36.41px,transparent 37.47px,#bbbbbb 37.47px,#bbbbbb 40.00px,transparent 40.00px)"></div>
<div style="left:563px;top:419.0px;width:2px;height:2px;background:#777;"></div>
<div style="left:567px;top:419.35px;width:40px;height:1.3px;background:transparent;background-image:linear-gradient(90deg,transparent 0.00px,#bbbbbb 0.00px,#bbbbbb 7.21px,transparent 7.21px,transparent 8.71px,#bbbbbb 8.71px,#bbbbbb 15.24px,transparent 15.24px,transparent 16.61px,#bbbbbb 16.61px,#bbbbbb 20.17px,transparent 20.17px,transparent 21.66px,#bbbbbb 21.66px,#bbbbbb 26.87px,transparent 26.87px,transparent 28.34px,#bbbbbb 28.34px,#bbbbbb 35.87px,transparent 35.87px,transparent 36.79px,#bbbbbb 36.79px,#bbbbbb 40.00px,transparent 40.00px)"></div>
<div style="left:563px;top:421.5px;width:2px;height:2px;background:#777;"></div>
<div style="left:567px;top:421.85px;width:55px;height:1.3px;background:transparent;background-image:linear-gradient(90deg,transparent 0.00px,#bbbbbb 0.00px,#bbbbbb 2.86px,transparent 2.86px,transparent 3.91px,#bbbbbb 3.91px,#bbbbbb 10.56px,transparent 10.56px,transparent 11.48px,#bbbbbb 11.48px,#bbbbbb 18.91px,transparent 18.91px,transparent 19.90px,#bbbbbb 19.90px,#bbbbbb 26.89px,transparent 26.89px,transparent 27.79px,#bbbbbb 27.79px,#bbbbbb 33.05px,transparent 33.05px,transparent 34.49px,#bbbbbb 34.49px,#bbbbbb 38.14px,transparent 38.14px,transparent 39.12px,#bbbbbb 39.12px,#bbbbbb 44.40px,transparent 44.40px,transparent 45.43px,#bbbbbb 45.43px,#bbbbbb 48.13px,transparent 48.13px,transparent 49.06px,#bbbbbb 49.06px,#bbbbbb 52.45px,transparent 52.45px,transparent 53.90px,#bbbbbb 53.90px,#bbbbbb 55.00px,transparent 55.00px)"></div>
<div style="left:682px;top:417px;width:6px;height:1px;background:#c8c8c8;"></div>
<div style="left:700px;top:416.85px;width:10px;height:1.3px;background:transparent;background-image:linear-gradient(90deg,transparent 0.00px,#bbbbbb 0.00px,#bbbbbb 3.43px,transparent 3.43px,transparent 4.78px,#bbbbbb 4.78px,#bbbbbb 7.91px,transparent 7.91px,transparent 9.08px,#bbbbbb 9.08px,#bbbbbb 10.00px,transparent 10.00px)"></div>
<div style="left:682px;top:420px;width:6px;height:1px;background:#c8c8c8;"></div>
<div style="left:706px;top:420px;width:6px;height:1px;background:#c8c8c8;"></div>
<div style="left:25px;top:711px;width:834px;height:9px;background:#474747;"></div>
<span class="t" style="left:30px;top:714.02px;font-size:6.8px;color:#d8d8d8;;transform:scaleX(0.8672);transform-origin:0 0">20.66%</span>
<span class="t" style="left:70px;top:714.02px;font-size:6.8px;color:#c8c8c8;;transform:scaleX(0.9252);transform-origin:0 0">2232 px x 2854 px (250 ppi)</span>
<svg style="left:165px;top:714.5px" width="3" height="5" viewBox="0 0 3 5" fill="none" stroke="#c0c0c0" stroke-width="0.8"><path d="M0.5 0.5L2.5 2.5L0.5 4.5"/></svg>
<div style="left:859px;top:61px;width:11px;height:659px;background:#4b4b4b;"></div>
<div style="left:864px;top:61px;width:1px;height:659px;background:#434343;"></div>
<div style="left:0px;top:40px;width:25px;height:680px;background:#535353;"></div>
<div style="left:0px;top:40px;width:25px;height:8px;background:#464646;"></div>
<svg style="left:3px;top:42px" width="6" height="4" viewBox="0 0 6 4" fill="none" stroke="#c8c8c8" stroke-width="0.8"><path d="M0.5 0.5L2.5 2L0.5 3.5M3 0.5L5 2L3 3.5"/></svg>
<div style="left:23px;top:48px;width:2px;height:672px;background:#4a4a4a;"></div>
<div style="left:2px;top:48px;width:21px;height:1px;background:#4a4a4a;"></div>
<div style="left:3px;top:61px;width:19px;height:17px;background:#3c3c3c;"></div>
<svg style="left:6px;top:63px" width="12" height="12" viewBox="0 0 12 12" fill="none" stroke="#dedede" stroke-width="1.1"><path d="M6 0.5V11.5M0.5 6H11.5"/><path d="M6 0L4.2 2.2H7.8Z M6 12L4.2 9.8H7.8Z M0 6L2.2 4.2V7.8Z M12 6L9.8 4.2V7.8Z" fill="#dedede" stroke="none"/></svg>
<div style="left:19.5px;top:74px;width:1.2px;height:1.2px;background:#9a9a9a;"></div>
<svg style="left:6px;top:82px" width="12" height="12" viewBox="0 0 12 12" fill="none" stroke="#dedede" stroke-width="1.1"><rect x="1" y="2" width="10" height="8" stroke-dasharray="2 1.3"/></svg>
<div style="left:19.5px;top:93px;width:1.2px;height:1.2px;background:#9a9a9a;"></div>
<svg style="left:6px;top:100px" width="12" height="12" viewBox="0 0 12 12" fill="none" stroke="#dedede" stroke-width="1.1"><path d="M1 2 Q6 -1 11 2 Q10 7 5 8 L3 11 M1 2 Q2 6 5 8"/></svg>
<div style="left:19.5px;top:111px;width:1.2px;height:1.2px;background:#9a9a9a;"></div>
<svg style="left:6px;top:118px" width="12" height="12" viewBox="0 0 12 12" fill="none" stroke="#dedede" stroke-width="1.1"><rect x="1" y="1" width="6" height="6" stroke-dasharray="1.6 1"/><path d="M5 5 L11 9 L8 9.5 L9.5 12 L8.5 12.3 L7 10 L5 11.5Z" fill="#dedede" stroke="none"/></svg>
<div style="left:19.5px;top:129px;width:1.2px;height:1.2px;background:#9a9a9a;"></div>
<svg style="left:6px;top:136px" width="12" height="12" viewBox="0 0 12 12" fill="none" stroke="#dedede" stroke-width="1.5"><path d="M3 0V9H12M0 3H9V12"/></svg>
<div style="left:19.5px;top:147px;width:1.2px;height:1.2px;background:#9a9a9a;"></div>
<svg style="left:6px;top:154px" width="12" height="12" viewBox="0 0 12 12" fill="none" stroke="#dedede" stroke-width="1.1"><rect x="1" y="1" width="10" height="10"/><path d="M1 1L11 11M11 1L1 11"/></svg>
<div style="left:19.5px;top:165px;width:1.2px;height:1.2px;background:#9a9a9a;"></div>
<svg style="left:6px;top:172px" width="12" height="12" viewBox="0 0 12 12" fill="none" stroke="#dedede" stroke-width="1.1"><path d="M1 11 L2 8 L7 3 L9 5 L4 10Z"/><path d="M7 3 L9 1 L11 3 L9 5" fill="#dedede"/></svg>
<div style="left:19.5px;top:183px;width:1.2px;height:1.2px;background:#9a9a9a;"></div>
<svg style="left:6px;top:190px" width="12" height="12" viewBox="0 0 12 12" fill="none" stroke="#dedede" stroke-width="1.1"><rect x="0" y="3.5" width="12" height="5" rx="2.5" transform="rotate(-45 6 6)" fill="#dedede" stroke="none"/><path d="M5 5h2v2h-2z" fill="#535353" stroke="none"/></svg>
<div style="left:19.5px;top:201px;width:1.2px;height:1.2px;background:#9a9a9a;"></div>
<svg style="left:6px;top:208px" width="12" height="12" viewBox="0 0 12 12" fill="none" stroke="#dedede" stroke-width="1.1"><path d="M11 1 L5 7" stroke-width="1.6"/><path d="M4 7.5 Q2 8 2 10 L1 11.5 Q4 11.5 5 9.5 Z" fill="#dedede"/></svg>
<div style="left:19.5px;top:219px;width:1.2px;height:1.2px;background:#9a9a9a;"></div>
<svg style="left:6px;top:226px" width="12" height="12" viewBox="0 0 12 12" fill="none" stroke="#dedede" stroke-width="1.1"><path d="M6 1 a1.8 1.8 0 1 1 0.01 0 M5 4 L4.5 7 H7.5 L7 4 M1.5 7.5 H10.5 V9.5 H1.5Z M2 11H10" fill="#dedede"/></svg>
<div style="left:19.5px;top:237px;width:1.2px;height:1.2px;background:#9a9a9a;"></div>
<svg style="left:6px;top:244px" width="12" height="12" viewBox="0 0 12 12" fill="none" stroke="#dedede" stroke-width="1.1"><path d="M11 1 L5 7" stroke-width="1.5"/><path d="M4 7.5 Q2 8 2 10 L1 11.5 Q4 11.5 5 9.5 Z" fill="#dedede"/><path d="M1 1 Q1 5 4 4"/></svg>
<div style="left:19.5px;top:255px;width:1.2px;height:1.2px;background:#9a9a9a;"></div>
<svg style="left:6px;top:262px" width="12" height="12" viewBox="0 0 12 12" fill="none" stroke="#dedede" stroke-width="1.1"><path d="M2 8 L7 2 L11 5 L6 11 H2Z" fill="#dedede"/><path d="M6 11H12"/></svg>
<div style="left:19.5px;top:273px;width:1.2px;height:1.2px;background:#9a9a9a;"></div>
<div style="left:6px;top:280px;width:11px;height:11px;border:1px solid #dedede;background:linear-gradient(90deg,#222,#ddd)"></div>
<div style="left:19.5px;top:291px;width:1.2px;height:1.2px;background:#9a9a9a;"></div>
<svg style="left:6px;top:298px" width="12" height="12" viewBox="0 0 12 12" fill="none" stroke="#dedede" stroke-width="1"><path d="M6 1 Q10 6 9.5 8.5 A3.5 3.5 0 0 1 2.5 8.5 Q2 6 6 1Z" fill="#dedede"/></svg>
<div style="left:19.5px;top:309px;width:1.2px;height:1.2px;background:#9a9a9a;"></div>
<svg style="left:6px;top:316px" width="12" height="12" viewBox="0 0 12 12" fill="none" stroke="#dedede" stroke-width="1.3"><circle cx="7" cy="4.5" r="3.5"/><path d="M4.5 7 L1 11" stroke-width="1.8"/></svg>
<div style="left:19.5px;top:327px;width:1.2px;height:1.2px;background:#9a9a9a;"></div>
<svg style="left:6px;top:334px" width="12" height="12" viewBox="0 0 12 12" fill="none" stroke="#dedede" stroke-width="1.1"><path d="M6 1 L10 6 L8 11 H4 L2 6Z M6 1 V6"/><circle cx="6" cy="7" r="1"/></svg>
<div style="left:19.5px;top:345px;width:1.2px;height:1.2px;background:#9a9a9a;"></div>
<svg style="left:6px;top:352px" width="12" height="12" viewBox="0 0 12 12" fill="none" stroke="#dedede" stroke-width="1.6"><path d="M1.5 3V1H10.5V3M6 1V11M4 11H8"/></svg>
<div style="left:19.5px;top:363px;width:1.2px;height:1.2px;background:#9a9a9a;"></div>
<svg style="left:6px;top:371px" width="12" height="12" viewBox="0 0 12 12" fill="none" stroke="#dedede" stroke-width="1.1"><path d="M2 0.5 L10 7.5 L6.5 7.8 L8.5 11.5 L7 12 L5 8.5 L2 11Z" fill="#dedede"/></svg>
<div style="left:19.5px;top:382px;width:1.2px;height:1.2px;background:#9a9a9a;"></div>
<svg style="left:6px;top:389px" width="12" height="12" viewBox="0 0 12 12" fill="none" stroke="#dedede" stroke-width="1.2"><rect x="1" y="2" width="10" height="8"/></svg>
<div style="left:19.5px;top:400px;width:1.2px;height:1.2px;background:#9a9a9a;"></div>
<svg style="left:6px;top:407px" width="12" height="12" viewBox="0 0 12 12" fill="none" stroke="#dedede" stroke-width="0.6"><path d="M3 6 V3 Q3 2 4 2 Q5 2 5 3 V5 V1.5 Q5 0.5 6 0.5 Q7 0.5 7 1.5 V5 V2.5 Q7 1.5 8 1.5 Q9 1.5 9 2.5 V6 Q10 5 11 6 L8 11 H4 L1.5 7.5 Q2 6 3 7Z" fill="#dedede"/></svg>
<div style="left:19.5px;top:418px;width:1.2px;height:1.2px;background:#9a9a9a;"></div>
<svg style="left:6px;top:425px" width="12" height="12" viewBox="0 0 12 12" fill="none" stroke="#dedede" stroke-width="1.3"><circle cx="5" cy="5" r="3.8"/><path d="M7.8 7.8 L11.5 11.5" stroke-width="1.9"/></svg>
<div style="left:19.5px;top:436px;width:1.2px;height:1.2px;background:#9a9a9a;"></div>
<div style="left:7px;top:448px;width:2.5px;height:2.5px;background:#e0e0e0;border-radius:50%"></div>
<div style="left:11px;top:448px;width:2.5px;height:2.5px;background:#e0e0e0;border-radius:50%"></div>
<div style="left:15px;top:448px;width:2.5px;height:2.5px;background:#e0e0e0;border-radius:50%"></div>
<div style="left:19.5px;top:453px;width:1.2px;height:1.2px;background:#9a9a9a;"></div>
<div style="left:3px;top:462px;width:5px;height:5px;background:#111;border:1px solid #ddd"></div>
<div style="left:6px;top:465px;width:5px;height:5px;background:#eee;"></div>
<svg style="left:14px;top:462px" width="7" height="7" viewBox="0 0 7 7" fill="none" stroke="#d0d0d0" stroke-width="0.9"><path d="M1 2 H5 V6 M3.5 0.5L5 2L3.5 3.5" /></svg>
<div style="left:9px;top:480px;width:11px;height:13px;background:#ffffff;border:1px solid #9a9a9a"></div>
<div style="left:3px;top:473px;width:11px;height:13px;background:#ffffff;border:1px solid #9a9a9a"></div>
<svg style="left:6px;top:500px" width="12" height="11" viewBox="0 0 12 11" fill="none" stroke="#cfcfcf" stroke-width="1"><rect x="0.5" y="0.5" width="11" height="10"/><circle cx="6" cy="5.5" r="2.6"/></svg>
<svg style="left:5px;top:518px" width="13" height="12" viewBox="0 0 13 12" fill="none" stroke="#cfcfcf" stroke-width="1"><rect x="3.5" y="0.5" width="9" height="7"/><rect x="0.5" y="3.5" width="9" height="7" fill="#535353"/></svg>
<div style="left:19.5px;top:530px;width:1.2px;height:1.2px;background:#9a9a9a;"></div>
<div style="left:870px;top:40px;width:25px;height:680px;background:#434343;"></div>
<div style="left:870px;top:49px;width:25px;height:671px;background:#535353;"></div>
<div style="left:870px;top:49px;width:1px;height:671px;background:#3f3f3f;"></div>
<div style="left:894px;top:49px;width:1px;height:671px;background:#3f3f3f;"></div>
<svg style="left:886px;top:42px" width="6" height="4" viewBox="0 0 6 4" fill="none" stroke="#c8c8c8" stroke-width="0.8"><path d="M0.5 0.5L2.5 2L0.5 3.5M3 0.5L5 2L3 3.5"/></svg>
<svg style="left:877px;top:59px" width="13" height="12" viewBox="0 0 13 12" fill="none" stroke="#dadada" stroke-width="1"><path d="M0.5 1H4M0.5 3.5H4M0.5 6H4M0.5 1V6" /><path d="M12 1 L6 7.5" stroke-width="1.6"/><path d="M5.5 7.5 Q3.5 8 3.5 10 L3 11.5 Q6 11.5 6.8 9 Z" fill="#dadada"/></svg>
<svg style="left:877px;top:78px" width="13" height="12" viewBox="0 0 13 12" fill="none" stroke="#dadada" stroke-width="1.2"><circle cx="3" cy="3" r="2.2" fill="#dadada"/><path d="M5 3H12M1 8.5H8"/><path d="M8 6 L12 8.5 L8 11Z" fill="#dadada"/></svg>
<div style="left:871px;top:97px;width:23px;height:1px;background:#484848;"></div>
<svg style="left:877px;top:106px" width="12" height="13" viewBox="0 0 12 13" fill="none" stroke="#dadada" stroke-width="1.1"><path d="M0.5 12 L4 1 L7.5 12M2 8H6M10.5 0.5V12.5"/></svg>
<svg style="left:878px;top:126px" width="9" height="12" viewBox="0 0 9 12" fill="none" stroke="#dadada" stroke-width="1.1"><path d="M4.5 0.5 H8.5 M5 0.5 V12 M7.5 0.5 V12"/><path d="M5 0.5 A3 3 0 0 0 5 6.5Z" fill="#dadada"/></svg>
<div style="left:871px;top:146px;width:23px;height:1px;background:#484848;"></div>
<svg style="left:876px;top:154px" width="13" height="14" viewBox="0 0 13 14" fill="none" stroke="#dadada" stroke-width="1.1"><path d="M3 13 Q8 7 6 1 Q10 4 9 12 M1 8 H11 M8 12 Q11 13 12 11"/></svg>
<div style="left:871px;top:174px;width:23px;height:1px;background:#484848;"></div>
<svg style="left:877px;top:183px" width="12" height="13" viewBox="0 0 12 13" fill="none" stroke="#dadada" stroke-width="1.1"><path d="M6 0.5 L11.5 3.5 V9.5 L6 12.5 L0.5 9.5 V3.5Z M0.5 3.5 L6 6.5 L11.5 3.5 M6 6.5V12.5"/></svg>
<div style="left:871px;top:202px;width:23px;height:1px;background:#484848;"></div>
<div style="left:895px;top:40px;width:185px;height:680px;background:#4a4a4a;"></div>
<div style="left:895px;top:40px;width:185px;height:9px;background:#434343;"></div>
<svg style="left:1066px;top:42px" width="6" height="4" viewBox="0 0 6 4" fill="none" stroke="#c8c8c8" stroke-width="0.8"><path d="M0.5 0.5L2.5 2L0.5 3.5M3 0.5L5 2L3 3.5"/></svg>
<div style="left:895px;top:49px;width:180px;height:19px;background:#434343;"></div>
<span class="t" style="left:901.4px;top:54.84px;font-size:7.6px;color:#bdbdbd;;transform:scaleX(0.8021);transform-origin:0 0">Swatc</span>
<span class="t" style="left:924px;top:54.84px;font-size:7.6px;color:#bdbdbd;;transform:scaleX(0.9147);transform-origin:0 0">Gradi</span>
<span class="t" style="left:947px;top:54.84px;font-size:7.6px;color:#bdbdbd;;transform:scaleX(0.8384);transform-origin:0 0">Patter</span>
<span class="t" style="left:969px;top:54.84px;font-size:7.6px;color:#bdbdbd;;transform:scaleX(0.9070);transform-origin:0 0">Histor</span>
<span class="t" style="left:992px;top:54.84px;font-size:7.6px;color:#bdbdbd;;transform:scaleX(0.8236);transform-origin:0 0">Actior</span>
<div style="left:920.5px;top:50px;width:1px;height:18px;background:#3b3b3b;"></div>
<div style="left:943.5px;top:50px;width:1px;height:18px;background:#3b3b3b;"></div>
<div style="left:966.5px;top:50px;width:1px;height:18px;background:#3b3b3b;"></div>
<div style="left:988.5px;top:50px;width:1px;height:18px;background:#3b3b3b;"></div>
<div style="left:1009.5px;top:49px;width:40px;height:19px;background:#535353;"></div>
<span class="t" style="left:1014px;top:54.74px;font-size:7.8px;color:#f0f0f0;font-weight:bold;;transform:scaleX(0.8035);transform-origin:0 0">Properties</span>
<svg style="left:1064px;top:56px" width="8" height="6" viewBox="0 0 8 6" fill="none" stroke="#c0c0c0" stroke-width="1"><path d="M0 0.5H8M0 3H8M0 5.5H8"/></svg>
<div style="left:895px;top:68px;width:180px;height:318px;background:#535353;"></div>
<div style="left:1074px;top:68px;width:1px;height:318px;background:#444;"></div>
<div style="left:903px;top:72.5px;width:13.5px;height:15px;background:#3b3b3b;"></div>
<svg style="left:906px;top:75px" width="8" height="10" viewBox="0 0 8 10" fill="none" stroke="#dadada" stroke-width="1"><path d="M0.5 0.5 H5 L7.5 3 V9.5 H0.5Z M5 0.5 V3 H7.5"/></svg>
<span class="t" style="left:920px;top:78.44px;font-size:7.8px;color:#d2d2d2;;transform:scaleX(0.7876);transform-origin:0 0">Document</span>
<div style="left:895px;top:92.5px;width:171px;height:1px;background:#474747;"></div>
<div style="left:1066px;top:93px;width:8px;height:275px;background:#484848;"></div>
<div style="left:1067px;top:104px;width:6px;height:223px;background:#5f5f5f;"></div>
<svg style="left:1068px;top:97px" width="4" height="3" viewBox="0 0 4 3" fill="none" stroke="#8a8a8a" stroke-width="0.8"><path d="M0.3 2.5L2 0.8L3.7 2.5"/></svg>
<svg style="left:1068px;top:361px" width="4" height="3" viewBox="0 0 4 3" fill="none" stroke="#8a8a8a" stroke-width="0.8"><path d="M0.3 0.5L2 2.2L3.7 0.5"/></svg>
<svg style="left:900.5px;top:101.0px" width="6" height="4" viewBox="0 0 6 4" fill="none" stroke="#9a9a9a" stroke-width="0.9"><path d="M0.5 0.5L3 3L5.5 0.5"/></svg>
<span class="t" style="left:911px;top:98.84px;font-size:7.6px;color:#e6e6e6;font-weight:bold;;transform:scaleX(0.7767);transform-origin:0 0">Canvas</span>
<span class="t" style="left:928.9px;top:116.63px;font-size:7px;color:#c4c4c4;;transform:scaleX(0.7719);transform-origin:0 0">W</span>
<div style="left:938.5px;top:115px;width:31px;height:10px;background:#434343;"></div>
<span class="t" style="left:941px;top:116.63px;font-size:7px;color:#dedede;;transform:scaleX(0.8832);transform-origin:0 0">2232 px</span>
<span class="t" style="left:979.8px;top:116.63px;font-size:7px;color:#a8a8a8;;transform:scaleX(0.8995);transform-origin:0 0">X</span>
<div style="left:989px;top:115px;width:31px;height:10px;background:#4c4c4c;"></div>
<span class="t" style="left:992px;top:116.63px;font-size:7px;color:#6e6e6e;;transform:scaleX(0.8314);transform-origin:0 0">0 px</span>
<span class="t" style="left:929px;top:133.83px;font-size:7px;color:#c4c4c4;;transform:scaleX(0.9891);transform-origin:0 0">H</span>
<div style="left:938.5px;top:132px;width:31px;height:10px;background:#434343;"></div>
<span class="t" style="left:941px;top:133.83px;font-size:7px;color:#dedede;;transform:scaleX(0.8832);transform-origin:0 0">2854 px</span>
<span class="t" style="left:980px;top:133.83px;font-size:7px;color:#a8a8a8;;transform:scaleX(0.8567);transform-origin:0 0">Y</span>
<div style="left:989px;top:132px;width:31px;height:10px;background:#4c4c4c;"></div>
<span class="t" style="left:992px;top:133.83px;font-size:7px;color:#6e6e6e;;transform:scaleX(0.8314);transform-origin:0 0">0 px</span>
<svg style="left:906px;top:122px" width="7" height="13" viewBox="0 0 7 13" fill="none" stroke="#cfcfcf" stroke-width="1.2"><circle cx="3.5" cy="3.2" r="2.4"/><circle cx="3.5" cy="9.8" r="2.4"/><path d="M3.5 5V8"/></svg>
<div style="left:938.5px;top:152px;width:13.5px;height:15.5px;background:#3a3a3a;"></div>
<svg style="left:941px;top:154px" width="9" height="11" viewBox="0 0 9 11" fill="none" stroke="#dddddd" stroke-width="0.9"><rect x="0.5" y="0.5" width="8" height="10"/><circle cx="4.5" cy="3.5" r="1.3" fill="#ddd"/><path d="M2 10 V7 Q4.5 5 7 7 V10Z" fill="#ddd" stroke="none"/></svg>
<svg style="left:956px;top:155px" width="12" height="9" viewBox="0 0 12 9" fill="none" stroke="#d0d0d0" stroke-width="0.9"><rect x="0.5" y="0.5" width="11" height="8"/><circle cx="6" cy="3" r="1.3" fill="#ddd"/><path d="M3 8.5 V6.5 Q6 4.5 9 6.5 V8.5Z" fill="#ddd" stroke="none"/></svg>
<span class="t" style="left:938.6px;top:176.13px;font-size:7.2px;color:#c8c8c8;;transform:scaleX(0.8628);transform-origin:0 0">Resolution: 250 pixels/inch</span>
<span class="t" style="left:918.5px;top:194.23px;font-size:7px;color:#c8c8c8;;transform:scaleX(0.8909);transform-origin:0 0">Mode</span>
<div style="left:939.5px;top:192.2px;width:81.2px;height:12.7px;background:#434343;"></div>
<span class="t" style="left:944.0px;top:195.18px;font-size:7px;color:#d8d8d8;;transform:scaleX(0.7830);transform-origin:0 0">RGB Color</span>
<svg style="left:1013.7px;top:197.04999999999998px" width="6" height="4" viewBox="0 0 6 4" fill="none" stroke="#a0a0a0" stroke-width="0.9"><path d="M0.5 0.5L3 3L5.5 0.5"/></svg>
<div style="left:939.5px;top:208.5px;width:81.2px;height:15px;background:#434343;"></div>
<span class="t" style="left:944.0px;top:212.63px;font-size:7px;color:#d8d8d8;;transform:scaleX(0.8761);transform-origin:0 0">16 Bits/Channel</span>
<svg style="left:1013.7px;top:214.5px" width="6" height="4" viewBox="0 0 6 4" fill="none" stroke="#a0a0a0" stroke-width="0.9"><path d="M0.5 0.5L3 3L5.5 0.5"/></svg>
<span class="t" style="left:925.7px;top:230.63px;font-size:7px;color:#c8c8c8;;transform:scaleX(0.8499);transform-origin:0 0">Fill</span>
<div style="left:938.3px;top:227px;width:11.5px;height:12.8px;background:#4a4a4a;border:1px solid #3c3c3c"></div>
<div style="left:953.4px;top:227px;width:67.3px;height:12.8px;background:#434343;"></div>
<span class="t" style="left:957.9px;top:230.03px;font-size:7px;color:#d8d8d8;;transform:scaleX(0.9151);transform-origin:0 0">Transparent</span>
<svg style="left:1013.6999999999999px;top:231.9px" width="6" height="4" viewBox="0 0 6 4" fill="none" stroke="#a0a0a0" stroke-width="0.9"><path d="M0.5 0.5L3 3L5.5 0.5"/></svg>
<div style="left:895px;top:246.5px;width:171px;height:2px;background:#484848;"></div>
<svg style="left:900.5px;top:256.2px" width="6" height="4" viewBox="0 0 6 4" fill="none" stroke="#9a9a9a" stroke-width="0.9"><path d="M0.5 0.5L3 3L5.5 0.5"/></svg>
<span class="t" style="left:911px;top:254.04px;font-size:7.6px;color:#e6e6e6;font-weight:bold;;transform:scaleX(0.8193);transform-origin:0 0">Rulers &amp; Grids</span>
<div style="left:903px;top:270px;width:14.5px;height:16.5px;background:#3a3a3a;"></div>
<svg style="left:905px;top:272px" width="10" height="12" viewBox="0 0 10 12" fill="none" stroke="#e8e8e8" stroke-width="1"><path d="M0 1.5H10M1.5 0V12" stroke-width="3"/><path d="M4 1.5H10" stroke="#888" stroke-width="1"/></svg>
<svg style="left:925px;top:272px" width="12" height="12" viewBox="0 0 12 12" fill="none" stroke="#cfcfcf" stroke-width="0.9"><rect x="0.5" y="0.5" width="11" height="11"/><path d="M4 0.5V11.5M8 0.5V11.5M0.5 4H11.5M0.5 8H11.5"/></svg>
<svg style="left:946px;top:272px" width="11" height="12" viewBox="0 0 11 12" fill="none" stroke="#cfcfcf" stroke-width="0.9"><rect x="0.5" y="0.5" width="10" height="11" rx="1"/><path d="M3 3.5h1M7 3.5h1M3 8h1M7 8h1M5 5.8h1" stroke-width="1.2"/></svg>
<div style="left:975.2px;top:272px;width:45.1px;height:12.7px;background:#434343;"></div>
<span class="t" style="left:979.7px;top:274.98px;font-size:7px;color:#d8d8d8;;transform:scaleX(0.8354);transform-origin:0 0">Pixels</span>
<svg style="left:1013.3000000000001px;top:276.85px" width="6" height="4" viewBox="0 0 6 4" fill="none" stroke="#a0a0a0" stroke-width="0.9"><path d="M0.5 0.5L3 3L5.5 0.5"/></svg>
<div style="left:895px;top:293px;width:171px;height:2.5px;background:#484848;"></div>
<svg style="left:900.5px;top:303.5px" width="6" height="4" viewBox="0 0 6 4" fill="none" stroke="#9a9a9a" stroke-width="0.9"><path d="M0.5 0.5L3 3L5.5 0.5"/></svg>
<span class="t" style="left:911px;top:301.34px;font-size:7.6px;color:#e6e6e6;font-weight:bold;;transform:scaleX(0.8035);transform-origin:0 0">Guides</span>
<div style="left:903px;top:317px;width:14.5px;height:16.5px;background:#3a3a3a;"></div>
<svg style="left:906px;top:319px" width="9" height="12" viewBox="0 0 9 12" fill="none" stroke="#e0e0e0" stroke-width="0.9"><path d="M2.5 0V12M5 0V12M0 4H9M0 8.5H9"/></svg>
<svg style="left:925px;top:319px" width="12" height="12" viewBox="0 0 12 12" fill="none" stroke="#d6d6d6" stroke-width="0.9"><path d="M2.5 0V12M5 0V12M0 4H7M0 8H7"/><rect x="7" y="7.5" width="4.5" height="4" fill="#ddd" stroke="none"/></svg>
<div style="left:944px;top:317px;width:15px;height:16.5px;background:#3a3a3a;"></div>
<svg style="left:946px;top:319px" width="11" height="12" viewBox="0 0 11 12" fill="none" stroke="#dcdcdc" stroke-width="0.9"><path d="M2 0V12M4.5 3H10M4.5 3L6.5 1M4.5 3L6.5 5"/><rect x="7" y="7" width="3.5" height="4.5" fill="#ddd" stroke="none"/></svg>
<div style="left:975px;top:320px;width:45px;height:13px;background:#434343;"></div>
<svg style="left:1013px;top:325.0px" width="6" height="4" viewBox="0 0 6 4" fill="none" stroke="#a0a0a0" stroke-width="0.9"><path d="M0.5 0.5L3 3L5.5 0.5"/></svg>
<div style="left:979px;top:326px;width:27px;height:1.6px;background:#d0d0d0;"></div>
<div style="left:895px;top:340px;width:171px;height:2.5px;background:#484848;"></div>
<svg style="left:900.5px;top:350.8px" width="6" height="4" viewBox="0 0 6 4" fill="none" stroke="#9a9a9a" stroke-width="0.9"><path d="M0.5 0.5L3 3L5.5 0.5"/></svg>
<span class="t" style="left:911px;top:348.64px;font-size:7.6px;color:#e6e6e6;font-weight:bold;;transform:scaleX(0.8422);transform-origin:0 0">Quick Actions</span>
<div style="left:895px;top:385px;width:180px;height:1px;background:#3c3c3c;"></div>
<div style="left:895px;top:386px;width:180px;height:21px;background:#434343;"></div>
<div style="left:896px;top:388px;width:30px;height:19px;background:#535353;"></div>
<span class="t" style="left:901.4px;top:392.64px;font-size:7.8px;color:#eaeaea;font-weight:bold;;transform:scaleX(0.7713);transform-origin:0 0">Layers</span>
<svg style="left:1064px;top:394px" width="8" height="6" viewBox="0 0 8 6" fill="none" stroke="#c0c0c0" stroke-width="1"><path d="M0 0.5H8M0 3H8M0 5.5H8"/></svg>
<div style="left:895px;top:407px;width:180px;height:313px;background:#535353;"></div>
<div style="left:1074px;top:407px;width:1px;height:313px;background:#444;"></div>
<div style="left:899.5px;top:413px;width:52.5px;height:12.5px;background:#434343;"></div>
<svg style="left:903px;top:415px" width="7" height="8" viewBox="0 0 7 8" fill="none" stroke="#e0e0e0" stroke-width="1.1"><circle cx="3" cy="3" r="2.2"/><path d="M4.6 4.6L6.8 7.2" stroke-width="1.4"/></svg>
<span class="t" style="left:912px;top:416.63px;font-size:7.2px;color:#dedede;;transform:scaleX(0.8535);transform-origin:0 0">Kind</span>
<svg style="left:944px;top:418px" width="6" height="4" viewBox="0 0 6 4" fill="none" stroke="#aaaaaa" stroke-width="0.9"><path d="M0.5 0.5L3 3L5.5 0.5"/></svg>
<svg style="left:959px;top:414px" width="10" height="10" viewBox="0 0 10 10" fill="none" stroke="#d4d4d4" stroke-width="0.9"><rect x="0.5" y="0.5" width="9" height="9" rx="1"/><path d="M2 7.5 L4 5 L5.5 6.5 L7 4.5 L8.5 7.5Z" fill="#d4d4d4" stroke="none"/></svg>
<svg style="left:974px;top:414px" width="10" height="10" viewBox="0 0 10 10" fill="none" stroke="#d4d4d4" stroke-width="1.1"><circle cx="5" cy="5" r="4.3"/><path d="M5 0.7 A4.3 4.3 0 0 1 5 9.3Z" fill="#d4d4d4" stroke="none"/><path d="M2 8 L8 2"/></svg>
<svg style="left:989px;top:414px" width="10" height="10" viewBox="0 0 10 10" fill="none" stroke="#d4d4d4" stroke-width="1.3"><path d="M0.7 2.5V0.7H9.3V2.5M5 0.7V9.3M3 9.3H7"/></svg>
<svg style="left:1004px;top:414px" width="10" height="10" viewBox="0 0 10 10" fill="none" stroke="#d4d4d4" stroke-width="1.1"><rect x="1.5" y="1.5" width="7" height="7"/><path d="M0 1.5H2M8 1.5H10M0 8.5H2M8 8.5H10"/></svg>
<svg style="left:1019px;top:414px" width="10" height="10" viewBox="0 0 10 10" fill="none" stroke="#d4d4d4" stroke-width="0.9"><path d="M1 0.7 H6 L8.5 3.2 V9.3 H1Z"/><rect x="3" y="5" width="4.5" height="4" fill="#d4d4d4" stroke="none"/></svg>
<div style="left:1034.5px;top:413px;width:7px;height:7px;background:#e6e6e6;border-radius:50%"></div>
<div style="left:895px;top:428px;width:171px;height:1px;background:#484848;"></div>
<div style="left:899px;top:432px;width:78.5px;height:13px;background:#4f4f4f;"></div>
<span class="t" style="left:903.2px;top:436.13px;font-size:7px;color:#707070;;transform:scaleX(0.8954);transform-origin:0 0">Normal</span>
<svg style="left:969px;top:437px" width="6" height="4" viewBox="0 0 6 4" fill="none" stroke="#666" stroke-width="0.9"><path d="M0.5 0.5L3 3L5.5 0.5"/></svg>
<span class="t" style="left:982.4px;top:436.13px;font-size:7px;color:#707070;;transform:scaleX(0.8880);transform-origin:0 0">Opacity:</span>
<div style="left:1010px;top:432px;width:20.5px;height:12.5px;background:#474747;"></div>
<span class="t" style="left:1012px;top:435.82px;font-size:6.6px;color:#6a6a6a;;transform:scaleX(0.8886);transform-origin:0 0">100%</span>
<div style="left:1031px;top:432px;width:9px;height:12.5px;background:#4e4e4e;"></div>
<div style="left:895px;top:448px;width:171px;height:1px;background:#484848;"></div>
<span class="t" style="left:899.7px;top:455.43px;font-size:7px;color:#707070;;transform:scaleX(0.8906);transform-origin:0 0">Lock:</span>
<svg style="left:919px;top:453px" width="8" height="8" viewBox="0 0 8 8" fill="none" stroke="#707070" stroke-width="1"><path d="M0 0h2v2h-2zM4 0h2v2h-2zM2 2h2v2h-2zM6 2h2v2h-2zM0 4h2v2h-2zM4 4h2v2h-2zM2 6h2v2h-2zM6 6h2v2h-2z" fill="#8a8a8a" stroke="none"/></svg>
<svg style="left:934px;top:452px" width="9" height="10" viewBox="0 0 9 10" fill="none" stroke="#808080" stroke-width="1"><path d="M8.5 0.5 L3.5 6.5" stroke-width="1.3"/><path d="M3 6.5 Q1 7 1 9.5 Q3 9.5 4 8Z" fill="#808080"/></svg>
<svg style="left:947px;top:452px" width="9" height="10" viewBox="0 0 9 10" fill="none" stroke="#808080" stroke-width="0.9"><path d="M4.5 0V10M0 5H9"/><path d="M4.5 0L3 1.8H6Z M4.5 10L3 8.2H6Z M0 5L1.8 3.5V6.5Z M9 5L7.2 3.5V6.5Z" fill="#808080" stroke="none"/></svg>
<svg style="left:961px;top:453px" width="9" height="8" viewBox="0 0 9 8" fill="none" stroke="#808080" stroke-width="0.9"><path d="M0.5 2V7.5H8.5M2 0.5V6H8"/></svg>
<svg style="left:975px;top:452px" width="8" height="10" viewBox="0 0 8 10" fill="none" stroke="#808080" stroke-width="1"><path d="M2 4.5V3A2 2 0 0 1 6 3V4.5"/><rect x="1" y="4.5" width="6" height="5" fill="#808080" stroke="none"/></svg>
<span class="t" style="left:996.4px;top:455.43px;font-size:7px;color:#707070;;transform:scaleX(0.8910);transform-origin:0 0">Fill:</span>
<div style="left:1010px;top:452px;width:20.5px;height:12.5px;background:#474747;"></div>
<span class="t" style="left:1012px;top:455.32px;font-size:6.6px;color:#6a6a6a;;transform:scaleX(0.8886);transform-origin:0 0">100%</span>
<div style="left:1031px;top:452px;width:9px;height:12.5px;background:#4e4e4e;"></div>
<div style="left:895px;top:468.5px;width:171px;height:1px;background:#484848;"></div>
<div style="left:915px;top:469px;width:1px;height:236px;background:#4a4a4a;"></div>
<svg style="left:900px;top:474.5px" width="11" height="7" viewBox="0 0 11 7" fill="none" stroke="#b8b8b8" stroke-width="1"><path d="M0.5 3.5 Q5.5 -1.5 10.5 3.5 Q5.5 8.5 0.5 3.5Z"/><circle cx="5.5" cy="3.5" r="1.6" fill="#b8b8b8" stroke="none"/></svg>
<svg style="left:926.5px;top:476px" width="6" height="4" viewBox="0 0 6 4" fill="none" stroke="#aaaaaa" stroke-width="0.9"><path d="M0.5 0.5L3 3L5.5 0.5"/></svg>
<svg style="left:935px;top:473px" width="10" height="9" viewBox="0 0 10 9" fill="none" stroke="#e2e2e2" stroke-width="1"><path d="M0 1.5 H3.5 L4.5 2.5 H10 V9 H0Z" fill="#e2e2e2" stroke="none"/><path d="M0 4 H10" stroke="#535353" stroke-width="0.8"/></svg>
<span class="t" style="left:950.3px;top:475.43px;font-size:7.2px;color:#dcdcdc;;transform:scaleX(0.8967);transform-origin:0 0">adite text</span>
<div style="left:895px;top:486px;width:171px;height:1px;background:#484848;"></div>
<svg style="left:900px;top:498.0px" width="11" height="7" viewBox="0 0 11 7" fill="none" stroke="#b8b8b8" stroke-width="1"><path d="M0.5 3.5 Q5.5 -1.5 10.5 3.5 Q5.5 8.5 0.5 3.5Z"/><circle cx="5.5" cy="3.5" r="1.6" fill="#b8b8b8" stroke="none"/></svg>
<svg style="left:942.5px;top:496.5px" width="10" height="10" viewBox="0 0 10 10" fill="none" stroke="#e0e0e0" stroke-width="1.3"><path d="M0.7 2.8V0.7H9.3V2.8M5 0.7V9.3M3 9.3H7"/></svg>
<span class="t" style="left:962.9px;top:497.83px;font-size:7.4px;color:#e0e0e0;;transform:scaleX(0.8265);transform-origin:0 0">Layer 2</span>
<div style="left:895px;top:515px;width:171px;height:1px;background:#484848;"></div>
<div style="left:938px;top:519px;width:15.5px;height:21.5px;background:#ffffff;background-image:conic-gradient(#d6d6d6 25%,#fff 0 50%,#d6d6d6 0 75%,#fff 0);background-size:4px 4px;border:1px solid #3a3a3a"></div>
<div style="left:940px;top:522px;width:3px;height:4px;background:#9a3a3a;"></div>
<svg style="left:900px;top:526.5px" width="11" height="7" viewBox="0 0 11 7" fill="none" stroke="#b8b8b8" stroke-width="1"><path d="M0.5 3.5 Q5.5 -1.5 10.5 3.5 Q5.5 8.5 0.5 3.5Z"/><circle cx="5.5" cy="3.5" r="1.6" fill="#b8b8b8" stroke="none"/></svg>
<span class="t" style="left:959px;top:526.03px;font-size:7.4px;color:#e0e0e0;;transform:scaleX(0.8305);transform-origin:0 0">Layer 3</span>
<div style="left:895px;top:543.5px;width:171px;height:1px;background:#484848;"></div>
<svg style="left:900px;top:555.1px" width="11" height="7" viewBox="0 0 11 7" fill="none" stroke="#b8b8b8" stroke-width="1"><path d="M0.5 3.5 Q5.5 -1.5 10.5 3.5 Q5.5 8.5 0.5 3.5Z"/><circle cx="5.5" cy="3.5" r="1.6" fill="#b8b8b8" stroke="none"/></svg>
<svg style="left:942.5px;top:553.6px" width="10" height="10" viewBox="0 0 10 10" fill="none" stroke="#e0e0e0" stroke-width="1.3"><path d="M0.7 2.8V0.7H9.3V2.8M5 0.7V9.3M3 9.3H7"/></svg>
<span class="t" style="left:963px;top:555.13px;font-size:7.2px;color:#dcdcdc;;transform:scaleX(0.8697);transform-origin:0 0">cl6a0000000...&lt;&lt;&lt;&lt;&lt;&lt;&lt;&lt;&lt;0 d</span>
<div style="left:895px;top:572.6px;width:171px;height:1px;background:#484848;"></div>
<svg style="left:900px;top:583px" width="11" height="8" viewBox="0 0 11 8" fill="none" stroke="#5c5c5c" stroke-width="0.8"><rect x="2" y="0.5" width="7" height="7"/></svg>
<svg style="left:942.5px;top:582px" width="10" height="10" viewBox="0 0 10 10" fill="none" stroke="#e0e0e0" stroke-width="1.3"><path d="M0.7 2.8V0.7H9.3V2.8M5 0.7V9.3M3 9.3H7"/></svg>
<span class="t" style="left:963px;top:583.53px;font-size:7.2px;color:#dcdcdc;;transform:scaleX(0.8074);transform-origin:0 0">1aa</span>
<div style="left:895px;top:601px;width:171px;height:1px;background:#484848;"></div>
<svg style="left:900px;top:611.5px" width="11" height="7" viewBox="0 0 11 7" fill="none" stroke="#b8b8b8" stroke-width="1"><path d="M0.5 3.5 Q5.5 -1.5 10.5 3.5 Q5.5 8.5 0.5 3.5Z"/><circle cx="5.5" cy="3.5" r="1.6" fill="#b8b8b8" stroke="none"/></svg>
<svg style="left:942.5px;top:610px" width="10" height="10" viewBox="0 0 10 10" fill="none" stroke="#e0e0e0" stroke-width="1.3"><path d="M0.7 2.8V0.7H9.3V2.8M5 0.7V9.3M3 9.3H7"/></svg>
<span class="t" style="left:963px;top:611.53px;font-size:7.2px;color:#dcdcdc;;transform:scaleX(0.8324);transform-origin:0 0">169</span>
<div style="left:895px;top:629px;width:171px;height:1px;background:#484848;"></div>
<svg style="left:900px;top:640.5px" width="11" height="7" viewBox="0 0 11 7" fill="none" stroke="#b8b8b8" stroke-width="1"><path d="M0.5 3.5 Q5.5 -1.5 10.5 3.5 Q5.5 8.5 0.5 3.5Z"/><circle cx="5.5" cy="3.5" r="1.6" fill="#b8b8b8" stroke="none"/></svg>
<svg style="left:942.5px;top:639px" width="10" height="10" viewBox="0 0 10 10" fill="none" stroke="#e0e0e0" stroke-width="1.3"><path d="M0.7 2.8V0.7H9.3V2.8M5 0.7V9.3M3 9.3H7"/></svg>
<span class="t" style="left:963px;top:640.53px;font-size:7.2px;color:#dcdcdc;;transform:scaleX(1.0003);transform-origin:0 0">m</span>
<div style="left:895px;top:658px;width:171px;height:1px;background:#484848;"></div>
<svg style="left:900px;top:668.5px" width="11" height="7" viewBox="0 0 11 7" fill="none" stroke="#b8b8b8" stroke-width="1"><path d="M0.5 3.5 Q5.5 -1.5 10.5 3.5 Q5.5 8.5 0.5 3.5Z"/><circle cx="5.5" cy="3.5" r="1.6" fill="#b8b8b8" stroke="none"/></svg>
<svg style="left:942.5px;top:667px" width="10" height="10" viewBox="0 0 10 10" fill="none" stroke="#e0e0e0" stroke-width="1.3"><path d="M0.7 2.8V0.7H9.3V2.8M5 0.7V9.3M3 9.3H7"/></svg>
<span class="t" style="left:963px;top:668.53px;font-size:7.2px;color:#dcdcdc;;transform:scaleX(1.2213);transform-origin:0 0">125...</span>
<div style="left:895px;top:686px;width:171px;height:1px;background:#484848;"></div>
<svg style="left:900px;top:697.5px" width="11" height="7" viewBox="0 0 11 7" fill="none" stroke="#b8b8b8" stroke-width="1"><path d="M0.5 3.5 Q5.5 -1.5 10.5 3.5 Q5.5 8.5 0.5 3.5Z"/><circle cx="5.5" cy="3.5" r="1.6" fill="#b8b8b8" stroke="none"/></svg>
<svg style="left:942.5px;top:696px" width="10" height="10" viewBox="0 0 10 10" fill="none" stroke="#e0e0e0" stroke-width="1.3"><path d="M0.7 2.8V0.7H9.3V2.8M5 0.7V9.3M3 9.3H7"/></svg>
<span class="t" style="left:963px;top:697.53px;font-size:7.2px;color:#dcdcdc;;transform:scaleX(0.8048);transform-origin:0 0">01.01.1990</span>
<div style="left:895px;top:715px;width:171px;height:1px;background:#484848;"></div>
<div style="left:1066px;top:469px;width:8px;height:236px;background:#484848;"></div>
<div style="left:1067px;top:489px;width:6px;height:66px;background:#5f5f5f;"></div>
<svg style="left:1068px;top:473px" width="4" height="3" viewBox="0 0 4 3" fill="none" stroke="#8a8a8a" stroke-width="0.8"><path d="M0.3 2.5L2 0.8L3.7 2.5"/></svg>
<div style="left:895px;top:705px;width:180px;height:15px;background:#535353;"></div>
<svg style="left:948px;top:709px" width="11" height="6" viewBox="0 0 11 6" fill="none" stroke="#8a8a8a" stroke-width="1"><rect x="0.5" y="0.5" width="5" height="5" rx="2.5"/><rect x="5" y="0.5" width="5" height="5" rx="2.5"/></svg>
<span class="t" style="left:966px;top:707.5px;font-size:8px;color:#9a9a9a;font-style:italic">fx</span>
<svg style="left:982px;top:708px" width="10" height="9" viewBox="0 0 10 9" fill="none" stroke="#bdbdbd" stroke-width="1"><rect x="0.5" y="0.5" width="9" height="8"/><circle cx="5" cy="4.5" r="2.3" fill="#bdbdbd"/></svg>
<svg style="left:999px;top:707px" width="10" height="10" viewBox="0 0 10 10" fill="none" stroke="#bdbdbd" stroke-width="1"><circle cx="5" cy="5" r="4.3"/><path d="M5 0.7 A4.3 4.3 0 0 1 5 9.3Z" fill="#bdbdbd" stroke="none"/></svg>
<svg style="left:1015px;top:708px" width="11" height="9" viewBox="0 0 11 9" fill="none" stroke="#bdbdbd" stroke-width="1"><path d="M0 1 H4 L5 2 H11 V9 H0Z" fill="#bdbdbd" stroke="none"/></svg>
<svg style="left:1032px;top:707px" width="10" height="11" viewBox="0 0 10 11" fill="none" stroke="#bdbdbd" stroke-width="1"><rect x="0.5" y="0.5" width="9" height="10"/><path d="M5 3V8M2.5 5.5H7.5"/></svg>
<svg style="left:1049px;top:707px" width="10" height="11" viewBox="0 0 10 11" fill="none" stroke="#8f8f8f" stroke-width="0.9"><path d="M0 2H10M3.5 2V0.5H6.5V2M1.5 2 L2.2 10.5 H7.8 L8.5 2M4 4V9M6 4V9"/></svg>
<svg style="left:0;top:0" width="1080" height="720" viewBox="0 0 1080 720" fill="none">
<g stroke="#1d1d1d" stroke-width="2.4" stroke-linecap="butt" stroke-linejoin="miter">
<path d="M872 667.1H859.2V696H872M859.2 681.5H869.5"/>
<path d="M877.8 666V697M894.5 666L878.5 684.5M883.5 679L895 697"/>
<ellipse cx="907.6" cy="681.5" rx="10" ry="14.9"/>
<path d="M942 670.5 Q938.5 666.2 933.8 666.2 Q924.8 666.8 924.8 681.5 Q924.8 696.6 934 696.6 Q939.2 696.6 942 694.5V682.4H936"/>
<path d="M961.5 667.1H949.6V696H961.5M949.6 681.5H959.5"/>
<path d="M967.3 697.5L977.2 666L986.8 697.5M970.5 686H983.8"/>
</g>
<rect x="991.8" y="694" width="3.2" height="3.4" fill="#1d1d1d"/>
<g stroke="#7b9e2b" stroke-width="2.9">
<ellipse cx="1010.3" cy="681.5" rx="10.2" ry="14.7"/>
<path d="M1028.6 697.5V667.2H1035.5Q1043.2 667.2 1043.2 674.2Q1043.2 681.4 1035.5 681.4H1028.6M1035.5 681.4L1044.8 697.5"/>
<path d="M1067.8 670.5 Q1064.5 666.2 1059.5 666.2 Q1048.5 666.8 1048.5 681.5 Q1048.5 696.6 1059.5 696.6 Q1065 696.6 1067.8 694.5V682.4H1057.5"/>
</g></svg>
</body></html>
